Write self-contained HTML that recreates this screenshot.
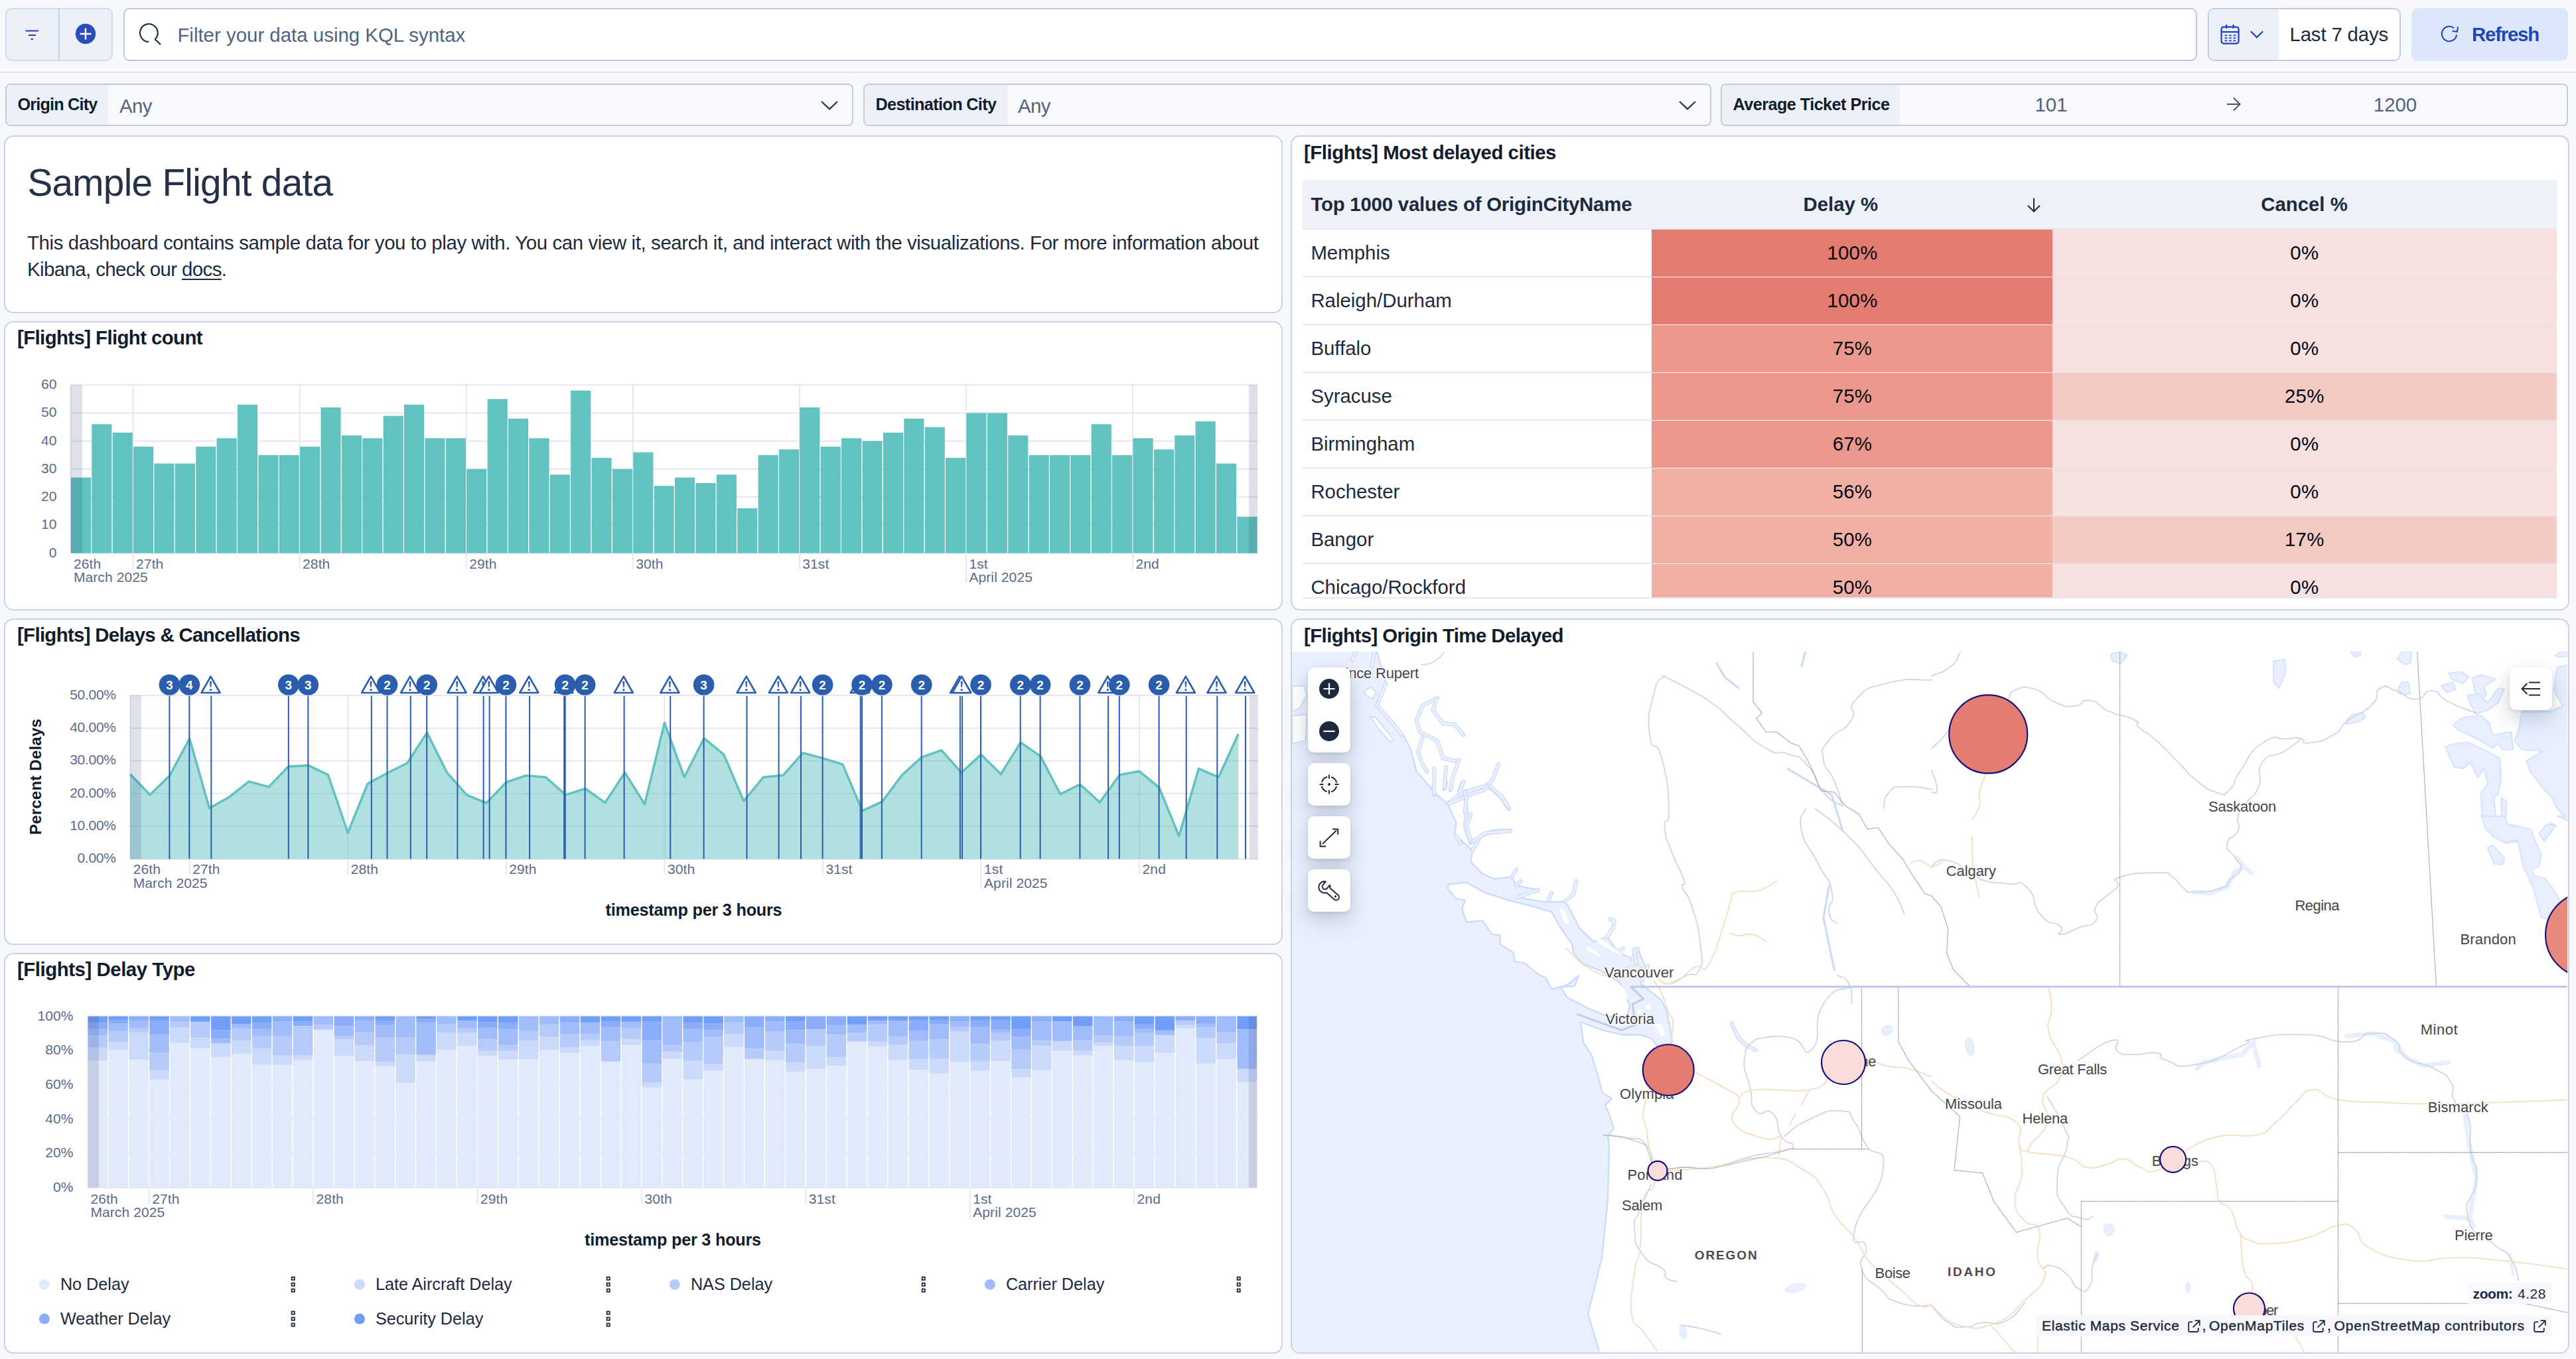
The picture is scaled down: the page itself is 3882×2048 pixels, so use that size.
<!DOCTYPE html>
<html lang="en"><head><meta charset="utf-8"><title>[Flights] Global Flight Dashboard</title>
<style>
html,body{margin:0;padding:0}
body{width:3882px;height:2048px;background:#F6F8FC;position:relative;overflow:hidden;font-family:"Liberation Sans",sans-serif}
.t{position:absolute;white-space:nowrap;line-height:1em}
.box{position:absolute;box-sizing:border-box;border:2px solid #CAD3E2}
.panel{background:#fff;border-radius:14px}
svg{overflow:visible}
svg text{font-family:"Liberation Sans",sans-serif}
</style></head>
<body>
<div class="box" style="left:8px;top:12px;width:162px;height:80px;background:#ECF1F9;border-color:#D3DAE8;border-radius:9px"></div>
<div style="position:absolute;left:88px;top:13px;width:2px;height:78px;background:#CAD3E2"></div>
<svg style="position:absolute;left:36px;top:42px" width="24" height="20" viewBox="0 0 24 20"><g stroke="#1E3FBF" stroke-width="2" fill="none"><path d="M2.5 4.5h19.5M7 11h11M10.5 17h3.5"/></g></svg>
<svg style="position:absolute;left:113px;top:35px" width="32" height="32" viewBox="0 0 32 32"><circle cx="16" cy="16" r="15.2" fill="#2A4DBB"/><path d="M16 7.5v17M7.5 16h17" stroke="#fff" stroke-width="2.4" fill="none"/></svg>
<div class="box" style="left:186px;top:12px;width:3125px;height:80px;background:#fff;border-color:#BFC9DC;border-radius:9px"></div>
<svg style="position:absolute;left:206px;top:32px" width="40" height="40" viewBox="0 0 40 40"><path d="M18.2 30.9 A13.4 13.4 0 1 1 27.6 27.2 M27.4 27 L36 35.2" stroke="#1D2A3E" stroke-width="2.1" fill="none"/></svg>
<div class="t" style="left:267.4px;top:37.5px;font-size:29.4px;font-weight:400;color:#516381;letter-spacing:0.014px;">Filter your data using KQL syntax</div>
<div class="box" style="left:3327px;top:12px;width:291px;height:80px;background:#fff;border-color:#C3CCDC;border-radius:10px;overflow:hidden"><div style="position:absolute;left:0;top:0;width:105px;height:76px;background:#ECF1F9"></div></div>
<svg style="position:absolute;left:3346px;top:36px" width="30" height="32" viewBox="0 0 30 32"><g stroke="#1E3FBF" stroke-width="2.2" fill="none"><rect x="1.6" y="4.6" width="26" height="25" rx="3.5"/><path d="M1.6 12.2h26M9.2 1v6M19.6 1v6"/><path d="M6.5 17.3h4M13 17.3h4M19.5 17.3h4M6.5 21.4h4M13 21.4h4M19.5 21.4h4M6.5 25.4h4M13 25.4h4M19.5 25.4h4" stroke-width="1.8"/></g></svg>
<svg style="position:absolute;left:3390px;top:45px" width="22" height="14" viewBox="0 0 22 14"><path d="M1.8 2.2 L11 11.2 L20.2 2.2" stroke="#1E3FBF" stroke-width="2.2" fill="none"/></svg>
<div class="t" style="left:3450.5px;top:36.9px;font-size:29.4px;font-weight:400;color:#1D2A3E;letter-spacing:-0.159px;">Last 7 days</div>
<div style="position:absolute;left:3634px;top:12px;width:236px;height:80px;background:#DCE7FC;border-radius:10px"></div>
<svg style="position:absolute;left:3678px;top:37px" width="28" height="28" viewBox="0 0 28 28"><path d="M24.2 13.8 A11.2 11.2 0 1 1 18.8 4.4 M24.4 1.6 v7.6 h-7.4" stroke="#1E48B8" stroke-width="2.1" fill="none" transform="rotate(8 13 14)"/></svg>
<div class="t" style="left:3725.0px;top:37.1px;font-size:29.4px;font-weight:700;color:#1E48B8;letter-spacing:-1.21px;">Refresh</div>
<div style="position:absolute;left:0;top:108px;width:3882px;height:2px;background:#E0E5EF"></div>
<div class="box" style="left:8px;top:126px;width:1278px;height:64px;background:#F7F9FD;border-color:#C3CCDC;border-radius:8px;overflow:hidden"><div style="position:absolute;left:0;top:0;width:153px;height:60px;background:#ECF1F9"></div></div><div class="t" style="left:26.5px;top:145.2px;font-size:25.2px;font-weight:700;color:#111C2C;letter-spacing:-0.8px;">Origin City</div>
<div class="box" style="left:1301px;top:126px;width:1278px;height:64px;background:#F7F9FD;border-color:#C3CCDC;border-radius:8px;overflow:hidden"><div style="position:absolute;left:0;top:0;width:215px;height:60px;background:#ECF1F9"></div></div><div class="t" style="left:1319.5px;top:145.2px;font-size:25.2px;font-weight:700;color:#111C2C;letter-spacing:-0.613px;">Destination City</div>
<div class="box" style="left:2593px;top:126px;width:1277px;height:64px;background:#F7F9FD;border-color:#C3CCDC;border-radius:8px;overflow:hidden"><div style="position:absolute;left:0;top:0;width:268px;height:60px;background:#ECF1F9"></div></div><div class="t" style="left:2611.5px;top:145.2px;font-size:25.2px;font-weight:700;color:#111C2C;letter-spacing:-0.527px;">Average Ticket Price</div>
<div class="t" style="left:180.0px;top:144.6px;font-size:29.4px;font-weight:400;color:#516381;letter-spacing:-0.553px;">Any</div>
<div class="t" style="left:1534.0px;top:144.6px;font-size:29.4px;font-weight:400;color:#516381;letter-spacing:-0.553px;">Any</div>
<svg style="position:absolute;left:1236px;top:150px" width="28" height="18" viewBox="0 0 28 18"><path d="M2 3 L14 14.4 L26 3" stroke="#2B3A55" stroke-width="2.4" fill="none"/></svg>
<svg style="position:absolute;left:2529px;top:150px" width="28" height="18" viewBox="0 0 28 18"><path d="M2 3 L14 14.4 L26 3" stroke="#2B3A55" stroke-width="2.4" fill="none"/></svg>
<div class="t" style="left:2091.0px;width:2000px;text-align:center;top:143.1px;font-size:29.4px;font-weight:400;color:#516381;">101</div>
<div class="t" style="left:2609.5px;width:2000px;text-align:center;top:143.1px;font-size:29.4px;font-weight:400;color:#516381;">1200</div>
<svg style="position:absolute;left:3354px;top:145px" width="24" height="24" viewBox="0 0 24 24"><path d="M2 12h19M12 2.5 L21.5 12 L12 21.5" stroke="#45546F" stroke-width="2" fill="none"/></svg>
<div class="box panel" style="left:6px;top:204px;width:1927px;height:268px;"></div>
<div class="box panel" style="left:6px;top:484px;width:1927px;height:436px;"></div>
<div class="box panel" style="left:6px;top:932px;width:1927px;height:492px;"></div>
<div class="box panel" style="left:6px;top:1436px;width:1927px;height:604px;"></div>
<div class="box panel" style="left:1945px;top:204px;width:1927px;height:716px;"></div>
<div class="t" style="left:41.4px;top:248.3px;font-size:56.7px;font-weight:400;color:#243148;letter-spacing:-0.707px;">Sample Flight data</div>
<div class="t" style="left:41.0px;top:351.1px;font-size:29.4px;font-weight:400;color:#1D2A3E;letter-spacing:-0.383px;">This dashboard contains sample data for you to play with. You can view it, search it, and interact with the visualizations. For more information about</div>
<div class="t" style="left:41px;top:390.7px;font-size:29.4px;color:#1D2A3E;letter-spacing:-0.58px">Kibana, check our <span style="text-decoration:underline;text-decoration-thickness:2px;text-underline-offset:4px">docs</span>.</div>
<div class="t" style="left:26.0px;top:493.9px;font-size:29.4px;font-weight:700;color:#111C2C;letter-spacing:-0.603px;">[Flights] Flight count</div>
<div class="t" style="left:26.0px;top:942.1px;font-size:29.4px;font-weight:700;color:#111C2C;letter-spacing:-0.675px;">[Flights] Delays &amp; Cancellations</div>
<div class="t" style="left:26.0px;top:1446.1px;font-size:29.4px;font-weight:700;color:#111C2C;letter-spacing:-0.457px;">[Flights] Delay Type</div>
<div class="t" style="left:1965.0px;top:215.1px;font-size:29.4px;font-weight:700;color:#111C2C;letter-spacing:-0.471px;">[Flights] Most delayed cities</div>
<svg style="position:absolute;left:0;top:0" width="3882" height="2048" viewBox="0 0 3882 2048">
<line x1="106.4" y1="833.6" x2="1895.3" y2="833.6" stroke="#E3E7F2" stroke-width="2"/>
<text x="85.6" y="839.5" font-size="21.0" fill="#5A6B8A" text-anchor="end" letter-spacing="0.1">0</text>
<line x1="106.4" y1="791.4" x2="1895.3" y2="791.4" stroke="#E3E7F2" stroke-width="2"/>
<text x="85.6" y="797.3" font-size="21.0" fill="#5A6B8A" text-anchor="end" letter-spacing="0.1">10</text>
<line x1="106.4" y1="749.1" x2="1895.3" y2="749.1" stroke="#E3E7F2" stroke-width="2"/>
<text x="85.6" y="755.0" font-size="21.0" fill="#5A6B8A" text-anchor="end" letter-spacing="0.1">20</text>
<line x1="106.4" y1="706.9" x2="1895.3" y2="706.9" stroke="#E3E7F2" stroke-width="2"/>
<text x="85.6" y="712.8" font-size="21.0" fill="#5A6B8A" text-anchor="end" letter-spacing="0.1">30</text>
<line x1="106.4" y1="664.7" x2="1895.3" y2="664.7" stroke="#E3E7F2" stroke-width="2"/>
<text x="85.6" y="670.6" font-size="21.0" fill="#5A6B8A" text-anchor="end" letter-spacing="0.1">40</text>
<line x1="106.4" y1="622.4" x2="1895.3" y2="622.4" stroke="#E3E7F2" stroke-width="2"/>
<text x="85.6" y="628.3" font-size="21.0" fill="#5A6B8A" text-anchor="end" letter-spacing="0.1">50</text>
<line x1="106.4" y1="580.2" x2="1895.3" y2="580.2" stroke="#E3E7F2" stroke-width="2"/>
<text x="85.6" y="586.1" font-size="21.0" fill="#5A6B8A" text-anchor="end" letter-spacing="0.1">60</text>
<line x1="200.6" y1="580.2" x2="200.6" y2="833.6" stroke="#E3E7F2" stroke-width="2"/>
<line x1="451.6" y1="580.2" x2="451.6" y2="833.6" stroke="#E3E7F2" stroke-width="2"/>
<line x1="702.7" y1="580.2" x2="702.7" y2="833.6" stroke="#E3E7F2" stroke-width="2"/>
<line x1="953.8" y1="580.2" x2="953.8" y2="833.6" stroke="#E3E7F2" stroke-width="2"/>
<line x1="1204.8" y1="580.2" x2="1204.8" y2="833.6" stroke="#E3E7F2" stroke-width="2"/>
<line x1="1455.9" y1="580.2" x2="1455.9" y2="833.6" stroke="#E3E7F2" stroke-width="2"/>
<line x1="1707.0" y1="580.2" x2="1707.0" y2="833.6" stroke="#E3E7F2" stroke-width="2"/>
<line x1="106.4" y1="580.2" x2="106.4" y2="833.6" stroke="#E3E7F2" stroke-width="2"/>
<rect x="106.9" y="719.6" width="30.1" height="114.0" fill="#61C2BF"/>
<rect x="138.3" y="639.3" width="30.1" height="194.3" fill="#61C2BF"/>
<rect x="169.7" y="652.0" width="30.1" height="181.6" fill="#61C2BF"/>
<rect x="201.1" y="673.1" width="30.1" height="160.5" fill="#61C2BF"/>
<rect x="232.4" y="698.5" width="30.1" height="135.1" fill="#61C2BF"/>
<rect x="263.8" y="698.5" width="30.1" height="135.1" fill="#61C2BF"/>
<rect x="295.2" y="673.1" width="30.1" height="160.5" fill="#61C2BF"/>
<rect x="326.6" y="660.4" width="30.1" height="173.2" fill="#61C2BF"/>
<rect x="358.0" y="609.8" width="30.1" height="223.8" fill="#61C2BF"/>
<rect x="389.4" y="685.8" width="30.1" height="147.8" fill="#61C2BF"/>
<rect x="420.7" y="685.8" width="30.1" height="147.8" fill="#61C2BF"/>
<rect x="452.1" y="673.1" width="30.1" height="160.5" fill="#61C2BF"/>
<rect x="483.5" y="614.0" width="30.1" height="219.6" fill="#61C2BF"/>
<rect x="514.9" y="656.2" width="30.1" height="177.4" fill="#61C2BF"/>
<rect x="546.3" y="660.4" width="30.1" height="173.2" fill="#61C2BF"/>
<rect x="577.7" y="626.7" width="30.1" height="206.9" fill="#61C2BF"/>
<rect x="609.0" y="609.8" width="30.1" height="223.8" fill="#61C2BF"/>
<rect x="640.4" y="660.4" width="30.1" height="173.2" fill="#61C2BF"/>
<rect x="671.8" y="660.4" width="30.1" height="173.2" fill="#61C2BF"/>
<rect x="703.2" y="706.9" width="30.1" height="126.7" fill="#61C2BF"/>
<rect x="734.6" y="601.3" width="30.1" height="232.3" fill="#61C2BF"/>
<rect x="766.0" y="630.9" width="30.1" height="202.7" fill="#61C2BF"/>
<rect x="797.4" y="660.4" width="30.1" height="173.2" fill="#61C2BF"/>
<rect x="828.7" y="715.3" width="30.1" height="118.3" fill="#61C2BF"/>
<rect x="860.1" y="588.6" width="30.1" height="245.0" fill="#61C2BF"/>
<rect x="891.5" y="690.0" width="30.1" height="143.6" fill="#61C2BF"/>
<rect x="922.9" y="706.9" width="30.1" height="126.7" fill="#61C2BF"/>
<rect x="954.3" y="681.6" width="30.1" height="152.0" fill="#61C2BF"/>
<rect x="985.7" y="732.2" width="30.1" height="101.4" fill="#61C2BF"/>
<rect x="1017.0" y="719.6" width="30.1" height="114.0" fill="#61C2BF"/>
<rect x="1048.4" y="728.0" width="30.1" height="105.6" fill="#61C2BF"/>
<rect x="1079.8" y="715.3" width="30.1" height="118.3" fill="#61C2BF"/>
<rect x="1111.2" y="766.0" width="30.1" height="67.6" fill="#61C2BF"/>
<rect x="1142.6" y="685.8" width="30.1" height="147.8" fill="#61C2BF"/>
<rect x="1174.0" y="677.3" width="30.1" height="156.3" fill="#61C2BF"/>
<rect x="1205.3" y="614.0" width="30.1" height="219.6" fill="#61C2BF"/>
<rect x="1236.7" y="673.1" width="30.1" height="160.5" fill="#61C2BF"/>
<rect x="1268.1" y="660.4" width="30.1" height="173.2" fill="#61C2BF"/>
<rect x="1299.5" y="664.7" width="30.1" height="168.9" fill="#61C2BF"/>
<rect x="1330.9" y="652.0" width="30.1" height="181.6" fill="#61C2BF"/>
<rect x="1362.3" y="630.9" width="30.1" height="202.7" fill="#61C2BF"/>
<rect x="1393.7" y="643.6" width="30.1" height="190.0" fill="#61C2BF"/>
<rect x="1425.0" y="690.0" width="30.1" height="143.6" fill="#61C2BF"/>
<rect x="1456.4" y="622.4" width="30.1" height="211.2" fill="#61C2BF"/>
<rect x="1487.8" y="622.4" width="30.1" height="211.2" fill="#61C2BF"/>
<rect x="1519.2" y="656.2" width="30.1" height="177.4" fill="#61C2BF"/>
<rect x="1550.6" y="685.8" width="30.1" height="147.8" fill="#61C2BF"/>
<rect x="1582.0" y="685.8" width="30.1" height="147.8" fill="#61C2BF"/>
<rect x="1613.3" y="685.8" width="30.1" height="147.8" fill="#61C2BF"/>
<rect x="1644.7" y="639.3" width="30.1" height="194.3" fill="#61C2BF"/>
<rect x="1676.1" y="685.8" width="30.1" height="147.8" fill="#61C2BF"/>
<rect x="1707.5" y="660.4" width="30.1" height="173.2" fill="#61C2BF"/>
<rect x="1738.9" y="677.3" width="30.1" height="156.3" fill="#61C2BF"/>
<rect x="1770.3" y="656.2" width="30.1" height="177.4" fill="#61C2BF"/>
<rect x="1801.6" y="635.1" width="30.1" height="198.5" fill="#61C2BF"/>
<rect x="1833.0" y="698.5" width="30.1" height="135.1" fill="#61C2BF"/>
<rect x="1864.4" y="778.7" width="30.1" height="54.9" fill="#61C2BF"/>
<rect x="106.4" y="580.2" width="17.4" height="253.4" fill="rgba(40,55,110,0.15)"/>
<rect x="1882.1" y="580.2" width="13.2" height="253.4" fill="rgba(40,55,110,0.15)"/>
<text x="110.9" y="857.0" font-size="21.0" fill="#5A6B8A" text-anchor="start" letter-spacing="0.1">26th</text>
<text x="110.9" y="877.3" font-size="21.0" fill="#5A6B8A" text-anchor="start" letter-spacing="0.1">March 2025</text>
<line x1="200.6" y1="833.6" x2="200.6" y2="857.5" stroke="#E3E7F2" stroke-width="2"/>
<text x="205.1" y="857.0" font-size="21.0" fill="#5A6B8A" text-anchor="start" letter-spacing="0.1">27th</text>
<line x1="451.6" y1="833.6" x2="451.6" y2="857.5" stroke="#E3E7F2" stroke-width="2"/>
<text x="456.1" y="857.0" font-size="21.0" fill="#5A6B8A" text-anchor="start" letter-spacing="0.1">28th</text>
<line x1="702.7" y1="833.6" x2="702.7" y2="857.5" stroke="#E3E7F2" stroke-width="2"/>
<text x="707.2" y="857.0" font-size="21.0" fill="#5A6B8A" text-anchor="start" letter-spacing="0.1">29th</text>
<line x1="953.8" y1="833.6" x2="953.8" y2="857.5" stroke="#E3E7F2" stroke-width="2"/>
<text x="958.3" y="857.0" font-size="21.0" fill="#5A6B8A" text-anchor="start" letter-spacing="0.1">30th</text>
<line x1="1204.8" y1="833.6" x2="1204.8" y2="857.5" stroke="#E3E7F2" stroke-width="2"/>
<text x="1209.3" y="857.0" font-size="21.0" fill="#5A6B8A" text-anchor="start" letter-spacing="0.1">31st</text>
<line x1="1455.9" y1="833.6" x2="1455.9" y2="878.5" stroke="#E3E7F2" stroke-width="2"/>
<text x="1460.4" y="857.0" font-size="21.0" fill="#5A6B8A" text-anchor="start" letter-spacing="0.1">1st</text>
<text x="1460.4" y="877.3" font-size="21.0" fill="#5A6B8A" text-anchor="start" letter-spacing="0.1">April 2025</text>
<line x1="1707.0" y1="833.6" x2="1707.0" y2="857.5" stroke="#E3E7F2" stroke-width="2"/>
<text x="1711.5" y="857.0" font-size="21.0" fill="#5A6B8A" text-anchor="start" letter-spacing="0.1">2nd</text>
</svg>
<svg style="position:absolute;left:0;top:0" width="3882" height="2048" viewBox="0 0 3882 2048">
<line x1="196.2" y1="1294.4" x2="1896.0" y2="1294.4" stroke="#E3E7F2" stroke-width="2"/>
<text x="174.7" y="1300.3" font-size="21.0" fill="#5A6B8A" text-anchor="end" letter-spacing="-0.248">0.00%</text>
<line x1="196.2" y1="1245.1" x2="1896.0" y2="1245.1" stroke="#E3E7F2" stroke-width="2"/>
<text x="174.7" y="1251.0" font-size="21.0" fill="#5A6B8A" text-anchor="end" letter-spacing="-0.287">10.00%</text>
<line x1="196.2" y1="1195.8" x2="1896.0" y2="1195.8" stroke="#E3E7F2" stroke-width="2"/>
<text x="174.7" y="1201.7" font-size="21.0" fill="#5A6B8A" text-anchor="end" letter-spacing="-0.287">20.00%</text>
<line x1="196.2" y1="1146.5" x2="1896.0" y2="1146.5" stroke="#E3E7F2" stroke-width="2"/>
<text x="174.7" y="1152.4" font-size="21.0" fill="#5A6B8A" text-anchor="end" letter-spacing="-0.287">30.00%</text>
<line x1="196.2" y1="1097.2" x2="1896.0" y2="1097.2" stroke="#E3E7F2" stroke-width="2"/>
<text x="174.7" y="1103.1" font-size="21.0" fill="#5A6B8A" text-anchor="end" letter-spacing="-0.287">40.00%</text>
<line x1="196.2" y1="1047.9" x2="1896.0" y2="1047.9" stroke="#E3E7F2" stroke-width="2"/>
<text x="174.7" y="1053.8" font-size="21.0" fill="#5A6B8A" text-anchor="end" letter-spacing="-0.287">50.00%</text>
<line x1="285.7" y1="1047.9" x2="285.7" y2="1294.4" stroke="#E3E7F2" stroke-width="2"/>
<line x1="524.2" y1="1047.9" x2="524.2" y2="1294.4" stroke="#E3E7F2" stroke-width="2"/>
<line x1="762.8" y1="1047.9" x2="762.8" y2="1294.4" stroke="#E3E7F2" stroke-width="2"/>
<line x1="1001.4" y1="1047.9" x2="1001.4" y2="1294.4" stroke="#E3E7F2" stroke-width="2"/>
<line x1="1239.9" y1="1047.9" x2="1239.9" y2="1294.4" stroke="#E3E7F2" stroke-width="2"/>
<line x1="1478.5" y1="1047.9" x2="1478.5" y2="1294.4" stroke="#E3E7F2" stroke-width="2"/>
<line x1="1717.1" y1="1047.9" x2="1717.1" y2="1294.4" stroke="#E3E7F2" stroke-width="2"/>
<line x1="196.2" y1="1047.9" x2="196.2" y2="1294.4" stroke="#E3E7F2" stroke-width="2"/>
<path d="M196.2 1166.7 L226.0 1197.8 L255.8 1168.7 L285.7 1113.0 L315.5 1218.0 L345.3 1201.2 L375.1 1177.6 L404.9 1185.9 L434.8 1154.9 L464.6 1153.4 L494.4 1167.7 L524.2 1255.0 L554.1 1181.0 L583.9 1164.7 L613.7 1150.0 L643.5 1104.1 L673.3 1163.8 L703.2 1197.8 L733.0 1210.1 L762.8 1179.0 L792.6 1168.7 L822.4 1171.2 L852.3 1197.8 L882.1 1188.4 L911.9 1209.6 L941.7 1164.2 L971.5 1212.1 L1001.4 1089.3 L1031.2 1171.2 L1061.0 1112.5 L1090.8 1137.1 L1120.7 1207.1 L1150.5 1171.2 L1180.3 1168.2 L1210.1 1134.7 L1239.9 1142.6 L1269.8 1151.9 L1299.6 1221.9 L1329.4 1208.1 L1359.2 1168.2 L1389.0 1141.1 L1418.9 1130.7 L1448.7 1164.2 L1478.5 1137.1 L1508.3 1166.7 L1538.1 1118.9 L1568.0 1139.6 L1597.8 1196.8 L1627.6 1182.0 L1657.4 1209.1 L1687.3 1167.7 L1717.1 1162.3 L1746.9 1186.9 L1776.7 1259.9 L1806.5 1158.3 L1836.4 1171.2 L1866.2 1106.1 L1866.2 1294.4 L196.2 1294.4 Z" fill="#61C2BF" fill-opacity="0.5"/>
<path d="M196.2 1166.7 L226.0 1197.8 L255.8 1168.7 L285.7 1113.0 L315.5 1218.0 L345.3 1201.2 L375.1 1177.6 L404.9 1185.9 L434.8 1154.9 L464.6 1153.4 L494.4 1167.7 L524.2 1255.0 L554.1 1181.0 L583.9 1164.7 L613.7 1150.0 L643.5 1104.1 L673.3 1163.8 L703.2 1197.8 L733.0 1210.1 L762.8 1179.0 L792.6 1168.7 L822.4 1171.2 L852.3 1197.8 L882.1 1188.4 L911.9 1209.6 L941.7 1164.2 L971.5 1212.1 L1001.4 1089.3 L1031.2 1171.2 L1061.0 1112.5 L1090.8 1137.1 L1120.7 1207.1 L1150.5 1171.2 L1180.3 1168.2 L1210.1 1134.7 L1239.9 1142.6 L1269.8 1151.9 L1299.6 1221.9 L1329.4 1208.1 L1359.2 1168.2 L1389.0 1141.1 L1418.9 1130.7 L1448.7 1164.2 L1478.5 1137.1 L1508.3 1166.7 L1538.1 1118.9 L1568.0 1139.6 L1597.8 1196.8 L1627.6 1182.0 L1657.4 1209.1 L1687.3 1167.7 L1717.1 1162.3 L1746.9 1186.9 L1776.7 1259.9 L1806.5 1158.3 L1836.4 1171.2 L1866.2 1106.1" fill="none" stroke="#61C2BF" stroke-width="3.5" stroke-linejoin="round"/>
<rect x="196.2" y="1047.9" width="16.5" height="246.5" fill="rgba(40,55,110,0.15)"/>
<rect x="1882.8" y="1047.9" width="13.2" height="246.5" fill="rgba(40,55,110,0.15)"/>
<line x1="255.4" y1="1048.9" x2="255.4" y2="1294.4" stroke="#2B5DAF" stroke-width="2"/>
<line x1="285.3" y1="1048.9" x2="285.3" y2="1294.4" stroke="#2B5DAF" stroke-width="2"/>
<line x1="318.3" y1="1048.9" x2="318.3" y2="1294.4" stroke="#2B5DAF" stroke-width="2"/>
<line x1="434.8" y1="1048.9" x2="434.8" y2="1294.4" stroke="#2B5DAF" stroke-width="2"/>
<line x1="464.3" y1="1048.9" x2="464.3" y2="1294.4" stroke="#2B5DAF" stroke-width="2"/>
<line x1="559.8" y1="1048.9" x2="559.8" y2="1294.4" stroke="#2B5DAF" stroke-width="2"/>
<line x1="583.5" y1="1048.9" x2="583.5" y2="1294.4" stroke="#2B5DAF" stroke-width="2"/>
<line x1="618.8" y1="1048.9" x2="618.8" y2="1294.4" stroke="#2B5DAF" stroke-width="2"/>
<line x1="643.2" y1="1048.9" x2="643.2" y2="1294.4" stroke="#2B5DAF" stroke-width="2"/>
<line x1="689.4" y1="1048.9" x2="689.4" y2="1294.4" stroke="#2B5DAF" stroke-width="2"/>
<line x1="728.6" y1="1048.9" x2="728.6" y2="1294.4" stroke="#2B5DAF" stroke-width="2"/>
<line x1="737.6" y1="1048.9" x2="737.6" y2="1294.4" stroke="#2B5DAF" stroke-width="2"/>
<line x1="762.4" y1="1048.9" x2="762.4" y2="1294.4" stroke="#2B5DAF" stroke-width="2"/>
<line x1="798.1" y1="1048.9" x2="798.1" y2="1294.4" stroke="#2B5DAF" stroke-width="2"/>
<line x1="850.2" y1="1048.9" x2="850.2" y2="1294.4" stroke="#2B5DAF" stroke-width="2"/>
<line x1="851.7" y1="1048.9" x2="851.7" y2="1294.4" stroke="#2B5DAF" stroke-width="2"/>
<line x1="881.6" y1="1048.9" x2="881.6" y2="1294.4" stroke="#2B5DAF" stroke-width="2"/>
<line x1="940.6" y1="1048.9" x2="940.6" y2="1294.4" stroke="#2B5DAF" stroke-width="2"/>
<line x1="1010.2" y1="1048.9" x2="1010.2" y2="1294.4" stroke="#2B5DAF" stroke-width="2"/>
<line x1="1060.6" y1="1048.9" x2="1060.6" y2="1294.4" stroke="#2B5DAF" stroke-width="2"/>
<line x1="1125.5" y1="1048.9" x2="1125.5" y2="1294.4" stroke="#2B5DAF" stroke-width="2"/>
<line x1="1173.6" y1="1048.9" x2="1173.6" y2="1294.4" stroke="#2B5DAF" stroke-width="2"/>
<line x1="1207.0" y1="1048.9" x2="1207.0" y2="1294.4" stroke="#2B5DAF" stroke-width="2"/>
<line x1="1239.6" y1="1048.9" x2="1239.6" y2="1294.4" stroke="#2B5DAF" stroke-width="2"/>
<line x1="1296.7" y1="1048.9" x2="1296.7" y2="1294.4" stroke="#2B5DAF" stroke-width="2"/>
<line x1="1299.0" y1="1048.9" x2="1299.0" y2="1294.4" stroke="#2B5DAF" stroke-width="2"/>
<line x1="1328.9" y1="1048.9" x2="1328.9" y2="1294.4" stroke="#2B5DAF" stroke-width="2"/>
<line x1="1388.7" y1="1048.9" x2="1388.7" y2="1294.4" stroke="#2B5DAF" stroke-width="2"/>
<line x1="1446.9" y1="1048.9" x2="1446.9" y2="1294.4" stroke="#2B5DAF" stroke-width="2"/>
<line x1="1450.0" y1="1048.9" x2="1450.0" y2="1294.4" stroke="#2B5DAF" stroke-width="2"/>
<line x1="1478.0" y1="1048.9" x2="1478.0" y2="1294.4" stroke="#2B5DAF" stroke-width="2"/>
<line x1="1537.7" y1="1048.9" x2="1537.7" y2="1294.4" stroke="#2B5DAF" stroke-width="2"/>
<line x1="1567.6" y1="1048.9" x2="1567.6" y2="1294.4" stroke="#2B5DAF" stroke-width="2"/>
<line x1="1627.4" y1="1048.9" x2="1627.4" y2="1294.4" stroke="#2B5DAF" stroke-width="2"/>
<line x1="1670.1" y1="1048.9" x2="1670.1" y2="1294.4" stroke="#2B5DAF" stroke-width="2"/>
<line x1="1686.8" y1="1048.9" x2="1686.8" y2="1294.4" stroke="#2B5DAF" stroke-width="2"/>
<line x1="1746.6" y1="1048.9" x2="1746.6" y2="1294.4" stroke="#2B5DAF" stroke-width="2"/>
<line x1="1787.7" y1="1048.9" x2="1787.7" y2="1294.4" stroke="#2B5DAF" stroke-width="2"/>
<line x1="1834.3" y1="1048.9" x2="1834.3" y2="1294.4" stroke="#2B5DAF" stroke-width="2"/>
<line x1="1877.0" y1="1048.9" x2="1877.0" y2="1294.4" stroke="#2B5DAF" stroke-width="2"/>
<g transform="translate(317.5 1032)"><path d="M0 -12.6 L14 12 H-14 Z" fill="#fff" stroke="#2B5DAF" stroke-width="2.6" stroke-linejoin="round"/><path d="M-1.5 -5.2 h3 l-0.7 9 h-1.6 Z" fill="#2B5DAF"/><circle cx="0" cy="7.6" r="1.7" fill="#2B5DAF"/></g>
<g transform="translate(559.0 1032)"><path d="M0 -12.6 L14 12 H-14 Z" fill="#fff" stroke="#2B5DAF" stroke-width="2.6" stroke-linejoin="round"/><path d="M-1.5 -5.2 h3 l-0.7 9 h-1.6 Z" fill="#2B5DAF"/><circle cx="0" cy="7.6" r="1.7" fill="#2B5DAF"/></g>
<g transform="translate(618.0 1032)"><path d="M0 -12.6 L14 12 H-14 Z" fill="#fff" stroke="#2B5DAF" stroke-width="2.6" stroke-linejoin="round"/><path d="M-1.5 -5.2 h3 l-0.7 9 h-1.6 Z" fill="#2B5DAF"/><circle cx="0" cy="7.6" r="1.7" fill="#2B5DAF"/></g>
<g transform="translate(688.6 1032)"><path d="M0 -12.6 L14 12 H-14 Z" fill="#fff" stroke="#2B5DAF" stroke-width="2.6" stroke-linejoin="round"/><path d="M-1.5 -5.2 h3 l-0.7 9 h-1.6 Z" fill="#2B5DAF"/><circle cx="0" cy="7.6" r="1.7" fill="#2B5DAF"/></g>
<g transform="translate(727.8 1032)"><path d="M0 -12.6 L14 12 H-14 Z" fill="#fff" stroke="#2B5DAF" stroke-width="2.6" stroke-linejoin="round"/><path d="M-1.5 -5.2 h3 l-0.7 9 h-1.6 Z" fill="#2B5DAF"/><circle cx="0" cy="7.6" r="1.7" fill="#2B5DAF"/></g>
<g transform="translate(736.8 1032)"><path d="M0 -12.6 L14 12 H-14 Z" fill="#fff" stroke="#2B5DAF" stroke-width="2.6" stroke-linejoin="round"/><path d="M-1.5 -5.2 h3 l-0.7 9 h-1.6 Z" fill="#2B5DAF"/><circle cx="0" cy="7.6" r="1.7" fill="#2B5DAF"/></g>
<g transform="translate(797.3 1032)"><path d="M0 -12.6 L14 12 H-14 Z" fill="#fff" stroke="#2B5DAF" stroke-width="2.6" stroke-linejoin="round"/><path d="M-1.5 -5.2 h3 l-0.7 9 h-1.6 Z" fill="#2B5DAF"/><circle cx="0" cy="7.6" r="1.7" fill="#2B5DAF"/></g>
<g transform="translate(849.4 1032)"><path d="M0 -12.6 L14 12 H-14 Z" fill="#fff" stroke="#2B5DAF" stroke-width="2.6" stroke-linejoin="round"/><path d="M-1.5 -5.2 h3 l-0.7 9 h-1.6 Z" fill="#2B5DAF"/><circle cx="0" cy="7.6" r="1.7" fill="#2B5DAF"/></g>
<g transform="translate(939.8 1032)"><path d="M0 -12.6 L14 12 H-14 Z" fill="#fff" stroke="#2B5DAF" stroke-width="2.6" stroke-linejoin="round"/><path d="M-1.5 -5.2 h3 l-0.7 9 h-1.6 Z" fill="#2B5DAF"/><circle cx="0" cy="7.6" r="1.7" fill="#2B5DAF"/></g>
<g transform="translate(1009.4 1032)"><path d="M0 -12.6 L14 12 H-14 Z" fill="#fff" stroke="#2B5DAF" stroke-width="2.6" stroke-linejoin="round"/><path d="M-1.5 -5.2 h3 l-0.7 9 h-1.6 Z" fill="#2B5DAF"/><circle cx="0" cy="7.6" r="1.7" fill="#2B5DAF"/></g>
<g transform="translate(1124.7 1032)"><path d="M0 -12.6 L14 12 H-14 Z" fill="#fff" stroke="#2B5DAF" stroke-width="2.6" stroke-linejoin="round"/><path d="M-1.5 -5.2 h3 l-0.7 9 h-1.6 Z" fill="#2B5DAF"/><circle cx="0" cy="7.6" r="1.7" fill="#2B5DAF"/></g>
<g transform="translate(1172.8 1032)"><path d="M0 -12.6 L14 12 H-14 Z" fill="#fff" stroke="#2B5DAF" stroke-width="2.6" stroke-linejoin="round"/><path d="M-1.5 -5.2 h3 l-0.7 9 h-1.6 Z" fill="#2B5DAF"/><circle cx="0" cy="7.6" r="1.7" fill="#2B5DAF"/></g>
<g transform="translate(1206.2 1032)"><path d="M0 -12.6 L14 12 H-14 Z" fill="#fff" stroke="#2B5DAF" stroke-width="2.6" stroke-linejoin="round"/><path d="M-1.5 -5.2 h3 l-0.7 9 h-1.6 Z" fill="#2B5DAF"/><circle cx="0" cy="7.6" r="1.7" fill="#2B5DAF"/></g>
<g transform="translate(1295.9 1032)"><path d="M0 -12.6 L14 12 H-14 Z" fill="#fff" stroke="#2B5DAF" stroke-width="2.6" stroke-linejoin="round"/><path d="M-1.5 -5.2 h3 l-0.7 9 h-1.6 Z" fill="#2B5DAF"/><circle cx="0" cy="7.6" r="1.7" fill="#2B5DAF"/></g>
<g transform="translate(1446.1 1032)"><path d="M0 -12.6 L14 12 H-14 Z" fill="#fff" stroke="#2B5DAF" stroke-width="2.6" stroke-linejoin="round"/><path d="M-1.5 -5.2 h3 l-0.7 9 h-1.6 Z" fill="#2B5DAF"/><circle cx="0" cy="7.6" r="1.7" fill="#2B5DAF"/></g>
<g transform="translate(1449.2 1032)"><path d="M0 -12.6 L14 12 H-14 Z" fill="#fff" stroke="#2B5DAF" stroke-width="2.6" stroke-linejoin="round"/><path d="M-1.5 -5.2 h3 l-0.7 9 h-1.6 Z" fill="#2B5DAF"/><circle cx="0" cy="7.6" r="1.7" fill="#2B5DAF"/></g>
<g transform="translate(1669.3 1032)"><path d="M0 -12.6 L14 12 H-14 Z" fill="#fff" stroke="#2B5DAF" stroke-width="2.6" stroke-linejoin="round"/><path d="M-1.5 -5.2 h3 l-0.7 9 h-1.6 Z" fill="#2B5DAF"/><circle cx="0" cy="7.6" r="1.7" fill="#2B5DAF"/></g>
<g transform="translate(1786.9 1032)"><path d="M0 -12.6 L14 12 H-14 Z" fill="#fff" stroke="#2B5DAF" stroke-width="2.6" stroke-linejoin="round"/><path d="M-1.5 -5.2 h3 l-0.7 9 h-1.6 Z" fill="#2B5DAF"/><circle cx="0" cy="7.6" r="1.7" fill="#2B5DAF"/></g>
<g transform="translate(1833.5 1032)"><path d="M0 -12.6 L14 12 H-14 Z" fill="#fff" stroke="#2B5DAF" stroke-width="2.6" stroke-linejoin="round"/><path d="M-1.5 -5.2 h3 l-0.7 9 h-1.6 Z" fill="#2B5DAF"/><circle cx="0" cy="7.6" r="1.7" fill="#2B5DAF"/></g>
<g transform="translate(1876.2 1032)"><path d="M0 -12.6 L14 12 H-14 Z" fill="#fff" stroke="#2B5DAF" stroke-width="2.6" stroke-linejoin="round"/><path d="M-1.5 -5.2 h3 l-0.7 9 h-1.6 Z" fill="#2B5DAF"/><circle cx="0" cy="7.6" r="1.7" fill="#2B5DAF"/></g>
<circle cx="255.4" cy="1032" r="15.8" fill="#2B5DAF"/>
<text x="255.4" y="1038.5" font-size="18.9" fill="#fff" text-anchor="middle" font-weight="700">3</text>
<circle cx="285.3" cy="1032" r="15.8" fill="#2B5DAF"/>
<text x="285.3" y="1038.5" font-size="18.9" fill="#fff" text-anchor="middle" font-weight="700">4</text>
<circle cx="434.8" cy="1032" r="15.8" fill="#2B5DAF"/>
<text x="434.8" y="1038.5" font-size="18.9" fill="#fff" text-anchor="middle" font-weight="700">3</text>
<circle cx="464.3" cy="1032" r="15.8" fill="#2B5DAF"/>
<text x="464.3" y="1038.5" font-size="18.9" fill="#fff" text-anchor="middle" font-weight="700">3</text>
<circle cx="583.5" cy="1032" r="15.8" fill="#2B5DAF"/>
<text x="583.5" y="1038.5" font-size="18.9" fill="#fff" text-anchor="middle" font-weight="700">2</text>
<circle cx="643.2" cy="1032" r="15.8" fill="#2B5DAF"/>
<text x="643.2" y="1038.5" font-size="18.9" fill="#fff" text-anchor="middle" font-weight="700">2</text>
<circle cx="762.4" cy="1032" r="15.8" fill="#2B5DAF"/>
<text x="762.4" y="1038.5" font-size="18.9" fill="#fff" text-anchor="middle" font-weight="700">2</text>
<circle cx="851.7" cy="1032" r="15.8" fill="#2B5DAF"/>
<text x="851.7" y="1038.5" font-size="18.9" fill="#fff" text-anchor="middle" font-weight="700">2</text>
<circle cx="881.6" cy="1032" r="15.8" fill="#2B5DAF"/>
<text x="881.6" y="1038.5" font-size="18.9" fill="#fff" text-anchor="middle" font-weight="700">2</text>
<circle cx="1060.6" cy="1032" r="15.8" fill="#2B5DAF"/>
<text x="1060.6" y="1038.5" font-size="18.9" fill="#fff" text-anchor="middle" font-weight="700">3</text>
<circle cx="1239.6" cy="1032" r="15.8" fill="#2B5DAF"/>
<text x="1239.6" y="1038.5" font-size="18.9" fill="#fff" text-anchor="middle" font-weight="700">2</text>
<circle cx="1299.0" cy="1032" r="15.8" fill="#2B5DAF"/>
<text x="1299.0" y="1038.5" font-size="18.9" fill="#fff" text-anchor="middle" font-weight="700">2</text>
<circle cx="1328.9" cy="1032" r="15.8" fill="#2B5DAF"/>
<text x="1328.9" y="1038.5" font-size="18.9" fill="#fff" text-anchor="middle" font-weight="700">2</text>
<circle cx="1388.7" cy="1032" r="15.8" fill="#2B5DAF"/>
<text x="1388.7" y="1038.5" font-size="18.9" fill="#fff" text-anchor="middle" font-weight="700">2</text>
<circle cx="1478.0" cy="1032" r="15.8" fill="#2B5DAF"/>
<text x="1478.0" y="1038.5" font-size="18.9" fill="#fff" text-anchor="middle" font-weight="700">2</text>
<circle cx="1537.7" cy="1032" r="15.8" fill="#2B5DAF"/>
<text x="1537.7" y="1038.5" font-size="18.9" fill="#fff" text-anchor="middle" font-weight="700">2</text>
<circle cx="1567.6" cy="1032" r="15.8" fill="#2B5DAF"/>
<text x="1567.6" y="1038.5" font-size="18.9" fill="#fff" text-anchor="middle" font-weight="700">2</text>
<circle cx="1627.4" cy="1032" r="15.8" fill="#2B5DAF"/>
<text x="1627.4" y="1038.5" font-size="18.9" fill="#fff" text-anchor="middle" font-weight="700">2</text>
<circle cx="1686.8" cy="1032" r="15.8" fill="#2B5DAF"/>
<text x="1686.8" y="1038.5" font-size="18.9" fill="#fff" text-anchor="middle" font-weight="700">2</text>
<circle cx="1746.6" cy="1032" r="15.8" fill="#2B5DAF"/>
<text x="1746.6" y="1038.5" font-size="18.9" fill="#fff" text-anchor="middle" font-weight="700">2</text>
<text x="200.7" y="1317.4" font-size="21.0" fill="#5A6B8A" text-anchor="start" letter-spacing="0.1">26th</text>
<text x="200.7" y="1337.7" font-size="21.0" fill="#5A6B8A" text-anchor="start" letter-spacing="0.1">March 2025</text>
<line x1="285.7" y1="1294.4" x2="285.7" y2="1317.9" stroke="#E3E7F2" stroke-width="2"/>
<text x="290.2" y="1317.4" font-size="21.0" fill="#5A6B8A" text-anchor="start" letter-spacing="0.1">27th</text>
<line x1="524.2" y1="1294.4" x2="524.2" y2="1317.9" stroke="#E3E7F2" stroke-width="2"/>
<text x="528.7" y="1317.4" font-size="21.0" fill="#5A6B8A" text-anchor="start" letter-spacing="0.1">28th</text>
<line x1="762.8" y1="1294.4" x2="762.8" y2="1317.9" stroke="#E3E7F2" stroke-width="2"/>
<text x="767.3" y="1317.4" font-size="21.0" fill="#5A6B8A" text-anchor="start" letter-spacing="0.1">29th</text>
<line x1="1001.4" y1="1294.4" x2="1001.4" y2="1317.9" stroke="#E3E7F2" stroke-width="2"/>
<text x="1005.9" y="1317.4" font-size="21.0" fill="#5A6B8A" text-anchor="start" letter-spacing="0.1">30th</text>
<line x1="1239.9" y1="1294.4" x2="1239.9" y2="1317.9" stroke="#E3E7F2" stroke-width="2"/>
<text x="1244.4" y="1317.4" font-size="21.0" fill="#5A6B8A" text-anchor="start" letter-spacing="0.1">31st</text>
<line x1="1478.5" y1="1294.4" x2="1478.5" y2="1338.9" stroke="#E3E7F2" stroke-width="2"/>
<text x="1483.0" y="1317.4" font-size="21.0" fill="#5A6B8A" text-anchor="start" letter-spacing="0.1">1st</text>
<text x="1483.0" y="1337.7" font-size="21.0" fill="#5A6B8A" text-anchor="start" letter-spacing="0.1">April 2025</text>
<line x1="1717.1" y1="1294.4" x2="1717.1" y2="1317.9" stroke="#E3E7F2" stroke-width="2"/>
<text x="1721.6" y="1317.4" font-size="21.0" fill="#5A6B8A" text-anchor="start" letter-spacing="0.1">2nd</text>
<text x="1045.5" y="1380.0" font-size="25.2" fill="#111C2C" text-anchor="middle" font-weight="700" letter-spacing="-0.203">timestamp per 3 hours</text>
<text transform="translate(62 1170.5) rotate(-90)" font-size="24" font-weight="700" fill="#111C2C" text-anchor="middle" letter-spacing="0.208">Percent Delays</text>
</svg>
<svg style="position:absolute;left:0;top:0" width="3882" height="2048" viewBox="0 0 3882 2048">
<line x1="131.9" y1="1789.7" x2="1894.7" y2="1789.7" stroke="#E3E7F2" stroke-width="2"/>
<text x="110.5" y="1795.9" font-size="21.0" fill="#5A6B8A" text-anchor="end" letter-spacing="0.1">0%</text>
<line x1="131.9" y1="1738.1" x2="1894.7" y2="1738.1" stroke="#E3E7F2" stroke-width="2"/>
<text x="110.5" y="1744.3" font-size="21.0" fill="#5A6B8A" text-anchor="end" letter-spacing="0.1">20%</text>
<line x1="131.9" y1="1686.5" x2="1894.7" y2="1686.5" stroke="#E3E7F2" stroke-width="2"/>
<text x="110.5" y="1692.7" font-size="21.0" fill="#5A6B8A" text-anchor="end" letter-spacing="0.1">40%</text>
<line x1="131.9" y1="1634.8" x2="1894.7" y2="1634.8" stroke="#E3E7F2" stroke-width="2"/>
<text x="110.5" y="1641.0" font-size="21.0" fill="#5A6B8A" text-anchor="end" letter-spacing="0.1">60%</text>
<line x1="131.9" y1="1583.2" x2="1894.7" y2="1583.2" stroke="#E3E7F2" stroke-width="2"/>
<text x="110.5" y="1589.4" font-size="21.0" fill="#5A6B8A" text-anchor="end" letter-spacing="0.1">80%</text>
<line x1="131.9" y1="1531.6" x2="1894.7" y2="1531.6" stroke="#E3E7F2" stroke-width="2"/>
<text x="110.5" y="1537.8" font-size="21.0" fill="#5A6B8A" text-anchor="end" letter-spacing="0.1">100%</text>
<rect x="132.5" y="1531.6" width="29.5" height="9.3" fill="#709DF7"/>
<rect x="132.5" y="1540.9" width="29.5" height="10.0" fill="#8BADF9"/>
<rect x="132.5" y="1550.9" width="29.5" height="9.1" fill="#A1BCFA"/>
<rect x="132.5" y="1560.0" width="29.5" height="18.9" fill="#B6CBFA"/>
<rect x="132.5" y="1578.9" width="29.5" height="19.8" fill="#CBDAFB"/>
<rect x="132.5" y="1598.7" width="29.5" height="191.0" fill="#E1EAFB"/>
<rect x="163.4" y="1531.6" width="29.5" height="5.4" fill="#709DF7"/>
<rect x="163.4" y="1537.0" width="29.5" height="5.8" fill="#8BADF9"/>
<rect x="163.4" y="1542.8" width="29.5" height="11.4" fill="#A1BCFA"/>
<rect x="163.4" y="1554.2" width="29.5" height="16.5" fill="#B6CBFA"/>
<rect x="163.4" y="1570.7" width="29.5" height="11.2" fill="#CBDAFB"/>
<rect x="163.4" y="1581.9" width="29.5" height="207.8" fill="#E1EAFB"/>
<rect x="194.4" y="1531.6" width="29.5" height="6.3" fill="#8BADF9"/>
<rect x="194.4" y="1537.9" width="29.5" height="11.9" fill="#A1BCFA"/>
<rect x="194.4" y="1549.8" width="29.5" height="6.1" fill="#B6CBFA"/>
<rect x="194.4" y="1555.8" width="29.5" height="41.7" fill="#CBDAFB"/>
<rect x="194.4" y="1597.5" width="29.5" height="192.2" fill="#E1EAFB"/>
<rect x="225.3" y="1531.6" width="29.5" height="6.3" fill="#709DF7"/>
<rect x="225.3" y="1537.9" width="29.5" height="21.0" fill="#8BADF9"/>
<rect x="225.3" y="1558.9" width="29.5" height="27.3" fill="#A1BCFA"/>
<rect x="225.3" y="1586.1" width="29.5" height="26.8" fill="#B6CBFA"/>
<rect x="225.3" y="1612.9" width="29.5" height="14.0" fill="#CBDAFB"/>
<rect x="225.3" y="1626.9" width="29.5" height="162.8" fill="#E1EAFB"/>
<rect x="256.2" y="1531.6" width="29.5" height="8.2" fill="#A1BCFA"/>
<rect x="256.2" y="1539.8" width="29.5" height="8.2" fill="#B6CBFA"/>
<rect x="256.2" y="1547.9" width="29.5" height="23.8" fill="#CBDAFB"/>
<rect x="256.2" y="1571.7" width="29.5" height="218.0" fill="#E1EAFB"/>
<rect x="287.1" y="1531.6" width="29.5" height="8.2" fill="#709DF7"/>
<rect x="287.1" y="1539.8" width="29.5" height="24.0" fill="#B6CBFA"/>
<rect x="287.1" y="1563.7" width="29.5" height="16.1" fill="#CBDAFB"/>
<rect x="287.1" y="1579.8" width="29.5" height="209.9" fill="#E1EAFB"/>
<rect x="318.1" y="1531.6" width="29.5" height="20.5" fill="#709DF7"/>
<rect x="318.1" y="1552.1" width="29.5" height="13.5" fill="#8BADF9"/>
<rect x="318.1" y="1565.6" width="29.5" height="6.8" fill="#A1BCFA"/>
<rect x="318.1" y="1572.4" width="29.5" height="20.5" fill="#CBDAFB"/>
<rect x="318.1" y="1592.9" width="29.5" height="196.8" fill="#E1EAFB"/>
<rect x="349.0" y="1531.6" width="29.5" height="12.1" fill="#709DF7"/>
<rect x="349.0" y="1543.7" width="29.5" height="6.5" fill="#A1BCFA"/>
<rect x="349.0" y="1550.2" width="29.5" height="18.6" fill="#B6CBFA"/>
<rect x="349.0" y="1568.9" width="29.5" height="19.1" fill="#CBDAFB"/>
<rect x="349.0" y="1588.0" width="29.5" height="201.7" fill="#E1EAFB"/>
<rect x="379.9" y="1531.6" width="29.5" height="9.3" fill="#709DF7"/>
<rect x="379.9" y="1540.9" width="29.5" height="10.0" fill="#8BADF9"/>
<rect x="379.9" y="1550.9" width="29.5" height="10.0" fill="#A1BCFA"/>
<rect x="379.9" y="1561.0" width="29.5" height="18.9" fill="#B6CBFA"/>
<rect x="379.9" y="1579.8" width="29.5" height="24.9" fill="#CBDAFB"/>
<rect x="379.9" y="1604.7" width="29.5" height="185.0" fill="#E1EAFB"/>
<rect x="410.8" y="1531.6" width="29.5" height="7.5" fill="#8BADF9"/>
<rect x="410.8" y="1539.1" width="29.5" height="21.9" fill="#A1BCFA"/>
<rect x="410.8" y="1561.0" width="29.5" height="29.8" fill="#B6CBFA"/>
<rect x="410.8" y="1590.8" width="29.5" height="14.7" fill="#CBDAFB"/>
<rect x="410.8" y="1605.4" width="29.5" height="184.3" fill="#E1EAFB"/>
<rect x="441.8" y="1531.6" width="29.5" height="7.5" fill="#709DF7"/>
<rect x="441.8" y="1539.1" width="29.5" height="7.2" fill="#8BADF9"/>
<rect x="441.8" y="1546.3" width="29.5" height="44.5" fill="#B6CBFA"/>
<rect x="441.8" y="1590.8" width="29.5" height="6.8" fill="#CBDAFB"/>
<rect x="441.8" y="1597.5" width="29.5" height="192.2" fill="#E1EAFB"/>
<rect x="472.7" y="1531.6" width="29.5" height="13.0" fill="#A1BCFA"/>
<rect x="472.7" y="1544.6" width="29.5" height="7.2" fill="#B6CBFA"/>
<rect x="472.7" y="1551.9" width="29.5" height="237.8" fill="#E1EAFB"/>
<rect x="503.6" y="1531.6" width="29.5" height="14.7" fill="#8BADF9"/>
<rect x="503.6" y="1546.3" width="29.5" height="14.7" fill="#A1BCFA"/>
<rect x="503.6" y="1561.0" width="29.5" height="5.1" fill="#B6CBFA"/>
<rect x="503.6" y="1566.1" width="29.5" height="24.9" fill="#CBDAFB"/>
<rect x="503.6" y="1591.0" width="29.5" height="198.7" fill="#E1EAFB"/>
<rect x="534.5" y="1531.6" width="29.5" height="6.3" fill="#8BADF9"/>
<rect x="534.5" y="1537.9" width="29.5" height="17.9" fill="#A1BCFA"/>
<rect x="534.5" y="1555.8" width="29.5" height="19.1" fill="#B6CBFA"/>
<rect x="534.5" y="1574.9" width="29.5" height="24.2" fill="#CBDAFB"/>
<rect x="534.5" y="1599.2" width="29.5" height="190.5" fill="#E1EAFB"/>
<rect x="565.5" y="1531.6" width="29.5" height="6.3" fill="#709DF7"/>
<rect x="565.5" y="1537.9" width="29.5" height="6.1" fill="#8BADF9"/>
<rect x="565.5" y="1543.9" width="29.5" height="19.1" fill="#A1BCFA"/>
<rect x="565.5" y="1563.0" width="29.5" height="37.7" fill="#B6CBFA"/>
<rect x="565.5" y="1600.8" width="29.5" height="6.1" fill="#CBDAFB"/>
<rect x="565.5" y="1606.8" width="29.5" height="182.9" fill="#E1EAFB"/>
<rect x="596.4" y="1531.6" width="29.5" height="31.4" fill="#A1BCFA"/>
<rect x="596.4" y="1563.0" width="29.5" height="26.6" fill="#B6CBFA"/>
<rect x="596.4" y="1589.6" width="29.5" height="42.2" fill="#CBDAFB"/>
<rect x="596.4" y="1631.8" width="29.5" height="157.9" fill="#E1EAFB"/>
<rect x="627.3" y="1531.6" width="29.5" height="4.2" fill="#709DF7"/>
<rect x="627.3" y="1535.8" width="29.5" height="5.1" fill="#8BADF9"/>
<rect x="627.3" y="1540.9" width="29.5" height="48.9" fill="#A1BCFA"/>
<rect x="627.3" y="1589.8" width="29.5" height="10.0" fill="#CBDAFB"/>
<rect x="627.3" y="1599.9" width="29.5" height="189.8" fill="#E1EAFB"/>
<rect x="658.2" y="1531.6" width="29.5" height="12.1" fill="#A1BCFA"/>
<rect x="658.2" y="1543.7" width="29.5" height="13.0" fill="#B6CBFA"/>
<rect x="658.2" y="1556.8" width="29.5" height="25.2" fill="#CBDAFB"/>
<rect x="658.2" y="1581.9" width="29.5" height="207.8" fill="#E1EAFB"/>
<rect x="689.2" y="1531.6" width="29.5" height="6.3" fill="#709DF7"/>
<rect x="689.2" y="1537.9" width="29.5" height="12.3" fill="#A1BCFA"/>
<rect x="689.2" y="1550.2" width="29.5" height="6.5" fill="#B6CBFA"/>
<rect x="689.2" y="1556.8" width="29.5" height="19.1" fill="#CBDAFB"/>
<rect x="689.2" y="1575.9" width="29.5" height="213.8" fill="#E1EAFB"/>
<rect x="720.1" y="1531.6" width="29.5" height="8.6" fill="#709DF7"/>
<rect x="720.1" y="1540.2" width="29.5" height="8.9" fill="#8BADF9"/>
<rect x="720.1" y="1549.1" width="29.5" height="17.0" fill="#A1BCFA"/>
<rect x="720.1" y="1566.1" width="29.5" height="17.0" fill="#B6CBFA"/>
<rect x="720.1" y="1583.1" width="29.5" height="8.6" fill="#CBDAFB"/>
<rect x="720.1" y="1591.7" width="29.5" height="198.0" fill="#E1EAFB"/>
<rect x="751.0" y="1531.6" width="29.5" height="9.3" fill="#709DF7"/>
<rect x="751.0" y="1540.9" width="29.5" height="9.1" fill="#8BADF9"/>
<rect x="751.0" y="1550.0" width="29.5" height="24.0" fill="#A1BCFA"/>
<rect x="751.0" y="1574.0" width="29.5" height="9.1" fill="#B6CBFA"/>
<rect x="751.0" y="1583.1" width="29.5" height="14.0" fill="#CBDAFB"/>
<rect x="751.0" y="1597.1" width="29.5" height="192.6" fill="#E1EAFB"/>
<rect x="782.0" y="1531.6" width="29.5" height="21.4" fill="#A1BCFA"/>
<rect x="782.0" y="1553.0" width="29.5" height="15.8" fill="#B6CBFA"/>
<rect x="782.0" y="1568.9" width="29.5" height="27.0" fill="#CBDAFB"/>
<rect x="782.0" y="1595.9" width="29.5" height="193.8" fill="#E1EAFB"/>
<rect x="812.9" y="1531.6" width="29.5" height="12.3" fill="#A1BCFA"/>
<rect x="812.9" y="1543.9" width="29.5" height="18.9" fill="#B6CBFA"/>
<rect x="812.9" y="1562.8" width="29.5" height="19.1" fill="#CBDAFB"/>
<rect x="812.9" y="1581.9" width="29.5" height="207.8" fill="#E1EAFB"/>
<rect x="843.8" y="1531.6" width="29.5" height="9.3" fill="#8BADF9"/>
<rect x="843.8" y="1540.9" width="29.5" height="17.9" fill="#A1BCFA"/>
<rect x="843.8" y="1558.9" width="29.5" height="19.1" fill="#B6CBFA"/>
<rect x="843.8" y="1578.0" width="29.5" height="8.9" fill="#CBDAFB"/>
<rect x="843.8" y="1586.8" width="29.5" height="202.9" fill="#E1EAFB"/>
<rect x="874.7" y="1531.6" width="29.5" height="9.3" fill="#709DF7"/>
<rect x="874.7" y="1540.9" width="29.5" height="17.0" fill="#A1BCFA"/>
<rect x="874.7" y="1557.9" width="29.5" height="9.1" fill="#B6CBFA"/>
<rect x="874.7" y="1567.0" width="29.5" height="8.9" fill="#CBDAFB"/>
<rect x="874.7" y="1575.9" width="29.5" height="213.8" fill="#E1EAFB"/>
<rect x="905.7" y="1531.6" width="29.5" height="7.5" fill="#709DF7"/>
<rect x="905.7" y="1539.1" width="29.5" height="7.9" fill="#8BADF9"/>
<rect x="905.7" y="1547.0" width="29.5" height="22.6" fill="#A1BCFA"/>
<rect x="905.7" y="1569.6" width="29.5" height="30.3" fill="#B6CBFA"/>
<rect x="905.7" y="1599.9" width="29.5" height="189.8" fill="#E1EAFB"/>
<rect x="936.6" y="1531.6" width="29.5" height="8.2" fill="#709DF7"/>
<rect x="936.6" y="1539.8" width="29.5" height="9.1" fill="#A1BCFA"/>
<rect x="936.6" y="1548.8" width="29.5" height="17.0" fill="#B6CBFA"/>
<rect x="936.6" y="1565.8" width="29.5" height="9.1" fill="#CBDAFB"/>
<rect x="936.6" y="1574.9" width="29.5" height="214.8" fill="#E1EAFB"/>
<rect x="967.5" y="1531.6" width="29.5" height="7.5" fill="#709DF7"/>
<rect x="967.5" y="1539.1" width="29.5" height="28.0" fill="#8BADF9"/>
<rect x="967.5" y="1567.0" width="29.5" height="35.9" fill="#A1BCFA"/>
<rect x="967.5" y="1602.9" width="29.5" height="28.9" fill="#B6CBFA"/>
<rect x="967.5" y="1631.8" width="29.5" height="7.2" fill="#CBDAFB"/>
<rect x="967.5" y="1639.0" width="29.5" height="150.7" fill="#E1EAFB"/>
<rect x="998.4" y="1531.6" width="29.5" height="43.3" fill="#A1BCFA"/>
<rect x="998.4" y="1574.9" width="29.5" height="10.0" fill="#B6CBFA"/>
<rect x="998.4" y="1584.9" width="29.5" height="10.9" fill="#CBDAFB"/>
<rect x="998.4" y="1595.9" width="29.5" height="193.8" fill="#E1EAFB"/>
<rect x="1029.4" y="1531.6" width="29.5" height="9.3" fill="#709DF7"/>
<rect x="1029.4" y="1540.9" width="29.5" height="10.0" fill="#8BADF9"/>
<rect x="1029.4" y="1550.9" width="29.5" height="19.1" fill="#A1BCFA"/>
<rect x="1029.4" y="1570.0" width="29.5" height="28.7" fill="#B6CBFA"/>
<rect x="1029.4" y="1598.7" width="29.5" height="28.2" fill="#CBDAFB"/>
<rect x="1029.4" y="1626.9" width="29.5" height="162.8" fill="#E1EAFB"/>
<rect x="1060.3" y="1531.6" width="29.5" height="10.5" fill="#709DF7"/>
<rect x="1060.3" y="1542.1" width="29.5" height="10.0" fill="#8BADF9"/>
<rect x="1060.3" y="1552.1" width="29.5" height="10.7" fill="#A1BCFA"/>
<rect x="1060.3" y="1562.8" width="29.5" height="41.0" fill="#B6CBFA"/>
<rect x="1060.3" y="1603.8" width="29.5" height="10.0" fill="#CBDAFB"/>
<rect x="1060.3" y="1613.8" width="29.5" height="175.9" fill="#E1EAFB"/>
<rect x="1091.2" y="1531.6" width="29.5" height="9.3" fill="#A1BCFA"/>
<rect x="1091.2" y="1540.9" width="29.5" height="17.9" fill="#B6CBFA"/>
<rect x="1091.2" y="1558.9" width="29.5" height="19.1" fill="#CBDAFB"/>
<rect x="1091.2" y="1578.0" width="29.5" height="211.7" fill="#E1EAFB"/>
<rect x="1122.1" y="1531.6" width="29.5" height="16.3" fill="#8BADF9"/>
<rect x="1122.1" y="1547.9" width="29.5" height="32.1" fill="#A1BCFA"/>
<rect x="1122.1" y="1580.1" width="29.5" height="15.8" fill="#B6CBFA"/>
<rect x="1122.1" y="1595.9" width="29.5" height="193.8" fill="#E1EAFB"/>
<rect x="1153.1" y="1531.6" width="29.5" height="7.5" fill="#8BADF9"/>
<rect x="1153.1" y="1539.1" width="29.5" height="14.9" fill="#A1BCFA"/>
<rect x="1153.1" y="1554.0" width="29.5" height="29.1" fill="#B6CBFA"/>
<rect x="1153.1" y="1583.1" width="29.5" height="14.7" fill="#CBDAFB"/>
<rect x="1153.1" y="1597.8" width="29.5" height="191.9" fill="#E1EAFB"/>
<rect x="1184.0" y="1531.6" width="29.5" height="7.5" fill="#709DF7"/>
<rect x="1184.0" y="1539.1" width="29.5" height="13.5" fill="#8BADF9"/>
<rect x="1184.0" y="1552.6" width="29.5" height="20.7" fill="#A1BCFA"/>
<rect x="1184.0" y="1573.3" width="29.5" height="27.7" fill="#B6CBFA"/>
<rect x="1184.0" y="1601.0" width="29.5" height="14.0" fill="#CBDAFB"/>
<rect x="1184.0" y="1615.0" width="29.5" height="174.7" fill="#E1EAFB"/>
<rect x="1214.9" y="1531.6" width="29.5" height="19.8" fill="#8BADF9"/>
<rect x="1214.9" y="1551.4" width="29.5" height="24.5" fill="#B6CBFA"/>
<rect x="1214.9" y="1575.9" width="29.5" height="34.9" fill="#CBDAFB"/>
<rect x="1214.9" y="1610.8" width="29.5" height="178.9" fill="#E1EAFB"/>
<rect x="1245.8" y="1531.6" width="29.5" height="13.3" fill="#8BADF9"/>
<rect x="1245.8" y="1544.9" width="29.5" height="14.2" fill="#A1BCFA"/>
<rect x="1245.8" y="1559.1" width="29.5" height="33.8" fill="#B6CBFA"/>
<rect x="1245.8" y="1592.9" width="29.5" height="13.3" fill="#CBDAFB"/>
<rect x="1245.8" y="1606.1" width="29.5" height="183.6" fill="#E1EAFB"/>
<rect x="1276.8" y="1531.6" width="29.5" height="12.3" fill="#709DF7"/>
<rect x="1276.8" y="1543.9" width="29.5" height="12.8" fill="#A1BCFA"/>
<rect x="1276.8" y="1556.8" width="29.5" height="12.8" fill="#B6CBFA"/>
<rect x="1276.8" y="1569.6" width="29.5" height="220.1" fill="#E1EAFB"/>
<rect x="1307.7" y="1531.6" width="29.5" height="6.3" fill="#709DF7"/>
<rect x="1307.7" y="1537.9" width="29.5" height="6.5" fill="#A1BCFA"/>
<rect x="1307.7" y="1544.4" width="29.5" height="25.4" fill="#B6CBFA"/>
<rect x="1307.7" y="1569.8" width="29.5" height="7.0" fill="#CBDAFB"/>
<rect x="1307.7" y="1576.8" width="29.5" height="212.9" fill="#E1EAFB"/>
<rect x="1338.6" y="1531.6" width="29.5" height="6.3" fill="#709DF7"/>
<rect x="1338.6" y="1537.9" width="29.5" height="24.0" fill="#A1BCFA"/>
<rect x="1338.6" y="1561.9" width="29.5" height="12.1" fill="#B6CBFA"/>
<rect x="1338.6" y="1574.0" width="29.5" height="23.8" fill="#CBDAFB"/>
<rect x="1338.6" y="1597.8" width="29.5" height="191.9" fill="#E1EAFB"/>
<rect x="1369.6" y="1531.6" width="29.5" height="5.4" fill="#709DF7"/>
<rect x="1369.6" y="1537.0" width="29.5" height="16.1" fill="#8BADF9"/>
<rect x="1369.6" y="1553.0" width="29.5" height="15.8" fill="#A1BCFA"/>
<rect x="1369.6" y="1568.9" width="29.5" height="27.0" fill="#B6CBFA"/>
<rect x="1369.6" y="1595.9" width="29.5" height="16.3" fill="#CBDAFB"/>
<rect x="1369.6" y="1612.2" width="29.5" height="177.5" fill="#E1EAFB"/>
<rect x="1400.5" y="1531.6" width="29.5" height="5.4" fill="#709DF7"/>
<rect x="1400.5" y="1537.0" width="29.5" height="6.1" fill="#8BADF9"/>
<rect x="1400.5" y="1543.0" width="29.5" height="23.1" fill="#A1BCFA"/>
<rect x="1400.5" y="1566.1" width="29.5" height="28.9" fill="#B6CBFA"/>
<rect x="1400.5" y="1595.0" width="29.5" height="22.8" fill="#CBDAFB"/>
<rect x="1400.5" y="1617.8" width="29.5" height="171.9" fill="#E1EAFB"/>
<rect x="1431.4" y="1531.6" width="29.5" height="7.5" fill="#8BADF9"/>
<rect x="1431.4" y="1539.1" width="29.5" height="7.9" fill="#A1BCFA"/>
<rect x="1431.4" y="1547.0" width="29.5" height="7.0" fill="#B6CBFA"/>
<rect x="1431.4" y="1554.0" width="29.5" height="45.9" fill="#CBDAFB"/>
<rect x="1431.4" y="1599.9" width="29.5" height="189.8" fill="#E1EAFB"/>
<rect x="1462.3" y="1531.6" width="29.5" height="5.4" fill="#709DF7"/>
<rect x="1462.3" y="1537.0" width="29.5" height="10.0" fill="#8BADF9"/>
<rect x="1462.3" y="1547.0" width="29.5" height="26.1" fill="#A1BCFA"/>
<rect x="1462.3" y="1573.1" width="29.5" height="25.9" fill="#B6CBFA"/>
<rect x="1462.3" y="1598.9" width="29.5" height="14.9" fill="#CBDAFB"/>
<rect x="1462.3" y="1613.8" width="29.5" height="175.9" fill="#E1EAFB"/>
<rect x="1493.3" y="1531.6" width="29.5" height="5.4" fill="#709DF7"/>
<rect x="1493.3" y="1537.0" width="29.5" height="14.9" fill="#8BADF9"/>
<rect x="1493.3" y="1551.9" width="29.5" height="4.9" fill="#A1BCFA"/>
<rect x="1493.3" y="1556.8" width="29.5" height="11.2" fill="#B6CBFA"/>
<rect x="1493.3" y="1567.9" width="29.5" height="31.0" fill="#CBDAFB"/>
<rect x="1493.3" y="1598.9" width="29.5" height="190.8" fill="#E1EAFB"/>
<rect x="1524.2" y="1531.6" width="29.5" height="18.4" fill="#709DF7"/>
<rect x="1524.2" y="1550.0" width="29.5" height="11.9" fill="#8BADF9"/>
<rect x="1524.2" y="1561.9" width="29.5" height="19.1" fill="#A1BCFA"/>
<rect x="1524.2" y="1581.0" width="29.5" height="30.5" fill="#B6CBFA"/>
<rect x="1524.2" y="1611.5" width="29.5" height="12.3" fill="#CBDAFB"/>
<rect x="1524.2" y="1623.8" width="29.5" height="165.9" fill="#E1EAFB"/>
<rect x="1555.1" y="1531.6" width="29.5" height="7.5" fill="#8BADF9"/>
<rect x="1555.1" y="1539.1" width="29.5" height="29.1" fill="#A1BCFA"/>
<rect x="1555.1" y="1568.2" width="29.5" height="7.7" fill="#B6CBFA"/>
<rect x="1555.1" y="1575.9" width="29.5" height="37.0" fill="#CBDAFB"/>
<rect x="1555.1" y="1612.9" width="29.5" height="176.8" fill="#E1EAFB"/>
<rect x="1586.0" y="1531.6" width="29.5" height="7.5" fill="#709DF7"/>
<rect x="1586.0" y="1539.1" width="29.5" height="29.8" fill="#A1BCFA"/>
<rect x="1586.0" y="1568.9" width="29.5" height="14.4" fill="#CBDAFB"/>
<rect x="1586.0" y="1583.3" width="29.5" height="206.4" fill="#E1EAFB"/>
<rect x="1617.0" y="1531.6" width="29.5" height="14.4" fill="#709DF7"/>
<rect x="1617.0" y="1546.0" width="29.5" height="22.1" fill="#A1BCFA"/>
<rect x="1617.0" y="1568.2" width="29.5" height="14.9" fill="#B6CBFA"/>
<rect x="1617.0" y="1583.1" width="29.5" height="7.7" fill="#CBDAFB"/>
<rect x="1617.0" y="1590.8" width="29.5" height="198.9" fill="#E1EAFB"/>
<rect x="1647.9" y="1531.6" width="29.5" height="28.4" fill="#A1BCFA"/>
<rect x="1647.9" y="1560.0" width="29.5" height="10.9" fill="#B6CBFA"/>
<rect x="1647.9" y="1571.0" width="29.5" height="5.6" fill="#CBDAFB"/>
<rect x="1647.9" y="1576.6" width="29.5" height="213.1" fill="#E1EAFB"/>
<rect x="1678.8" y="1531.6" width="29.5" height="7.5" fill="#8BADF9"/>
<rect x="1678.8" y="1539.1" width="29.5" height="21.9" fill="#A1BCFA"/>
<rect x="1678.8" y="1561.0" width="29.5" height="14.9" fill="#B6CBFA"/>
<rect x="1678.8" y="1575.9" width="29.5" height="21.9" fill="#CBDAFB"/>
<rect x="1678.8" y="1597.8" width="29.5" height="191.9" fill="#E1EAFB"/>
<rect x="1709.7" y="1531.6" width="29.5" height="12.3" fill="#709DF7"/>
<rect x="1709.7" y="1543.9" width="29.5" height="6.1" fill="#8BADF9"/>
<rect x="1709.7" y="1550.0" width="29.5" height="6.8" fill="#A1BCFA"/>
<rect x="1709.7" y="1556.8" width="29.5" height="19.1" fill="#B6CBFA"/>
<rect x="1709.7" y="1575.9" width="29.5" height="24.9" fill="#CBDAFB"/>
<rect x="1709.7" y="1600.8" width="29.5" height="188.9" fill="#E1EAFB"/>
<rect x="1740.7" y="1531.6" width="29.5" height="21.2" fill="#709DF7"/>
<rect x="1740.7" y="1552.8" width="29.5" height="7.0" fill="#A1BCFA"/>
<rect x="1740.7" y="1559.8" width="29.5" height="27.7" fill="#CBDAFB"/>
<rect x="1740.7" y="1587.5" width="29.5" height="202.2" fill="#E1EAFB"/>
<rect x="1771.6" y="1531.6" width="29.5" height="6.3" fill="#8BADF9"/>
<rect x="1771.6" y="1537.9" width="29.5" height="6.1" fill="#B6CBFA"/>
<rect x="1771.6" y="1543.9" width="29.5" height="5.8" fill="#CBDAFB"/>
<rect x="1771.6" y="1549.8" width="29.5" height="239.9" fill="#E1EAFB"/>
<rect x="1802.5" y="1531.6" width="29.5" height="11.2" fill="#8BADF9"/>
<rect x="1802.5" y="1542.8" width="29.5" height="5.1" fill="#A1BCFA"/>
<rect x="1802.5" y="1547.9" width="29.5" height="16.8" fill="#B6CBFA"/>
<rect x="1802.5" y="1564.7" width="29.5" height="38.2" fill="#CBDAFB"/>
<rect x="1802.5" y="1602.9" width="29.5" height="186.8" fill="#E1EAFB"/>
<rect x="1833.4" y="1531.6" width="29.5" height="24.2" fill="#A1BCFA"/>
<rect x="1833.4" y="1555.8" width="29.5" height="16.1" fill="#B6CBFA"/>
<rect x="1833.4" y="1571.9" width="29.5" height="24.0" fill="#CBDAFB"/>
<rect x="1833.4" y="1595.9" width="29.5" height="193.8" fill="#E1EAFB"/>
<rect x="1864.4" y="1531.6" width="29.5" height="19.8" fill="#709DF7"/>
<rect x="1864.4" y="1551.4" width="29.5" height="59.4" fill="#A1BCFA"/>
<rect x="1864.4" y="1610.8" width="29.5" height="20.0" fill="#CBDAFB"/>
<rect x="1864.4" y="1630.8" width="29.5" height="158.9" fill="#E1EAFB"/>
<rect x="131.9" y="1531.6" width="17" height="258.1" fill="rgba(40,55,110,0.15)"/>
<rect x="1881.9" y="1531.6" width="12.8" height="258.1" fill="rgba(40,55,110,0.15)"/>
<text x="136.4" y="1814.0" font-size="21.0" fill="#5A6B8A" text-anchor="start" letter-spacing="0.1">26th</text>
<text x="136.4" y="1834.3" font-size="21.0" fill="#5A6B8A" text-anchor="start" letter-spacing="0.1">March 2025</text>
<line x1="224.7" y1="1789.7" x2="224.7" y2="1814.5" stroke="#E3E7F2" stroke-width="2"/>
<text x="229.2" y="1814.0" font-size="21.0" fill="#5A6B8A" text-anchor="start" letter-spacing="0.1">27th</text>
<line x1="472.1" y1="1789.7" x2="472.1" y2="1814.5" stroke="#E3E7F2" stroke-width="2"/>
<text x="476.6" y="1814.0" font-size="21.0" fill="#5A6B8A" text-anchor="start" letter-spacing="0.1">28th</text>
<line x1="719.5" y1="1789.7" x2="719.5" y2="1814.5" stroke="#E3E7F2" stroke-width="2"/>
<text x="724.0" y="1814.0" font-size="21.0" fill="#5A6B8A" text-anchor="start" letter-spacing="0.1">29th</text>
<line x1="966.9" y1="1789.7" x2="966.9" y2="1814.5" stroke="#E3E7F2" stroke-width="2"/>
<text x="971.4" y="1814.0" font-size="21.0" fill="#5A6B8A" text-anchor="start" letter-spacing="0.1">30th</text>
<line x1="1214.3" y1="1789.7" x2="1214.3" y2="1814.5" stroke="#E3E7F2" stroke-width="2"/>
<text x="1218.8" y="1814.0" font-size="21.0" fill="#5A6B8A" text-anchor="start" letter-spacing="0.1">31st</text>
<line x1="1461.7" y1="1789.7" x2="1461.7" y2="1835.5" stroke="#E3E7F2" stroke-width="2"/>
<text x="1466.2" y="1814.0" font-size="21.0" fill="#5A6B8A" text-anchor="start" letter-spacing="0.1">1st</text>
<text x="1466.2" y="1834.3" font-size="21.0" fill="#5A6B8A" text-anchor="start" letter-spacing="0.1">April 2025</text>
<line x1="1709.1" y1="1789.7" x2="1709.1" y2="1814.5" stroke="#E3E7F2" stroke-width="2"/>
<text x="1713.6" y="1814.0" font-size="21.0" fill="#5A6B8A" text-anchor="start" letter-spacing="0.1">2nd</text>
<text x="1014.0" y="1877.2" font-size="25.2" fill="#111C2C" text-anchor="middle" font-weight="700" letter-spacing="-0.203">timestamp per 3 hours</text>
<circle cx="66.9" cy="1935.7" r="8" fill="#E1EAFB"/>
<text x="90.9" y="1944.3" font-size="25.2" fill="#1D2A3E" text-anchor="start" letter-spacing="0">No Delay</text>
<rect x="439.6" y="1924.6" width="4.2" height="4.2" fill="#fff" stroke="#1D2A3E" stroke-width="1.8"/>
<rect x="439.6" y="1933.6" width="4.2" height="4.2" fill="#fff" stroke="#1D2A3E" stroke-width="1.8"/>
<rect x="439.6" y="1942.6" width="4.2" height="4.2" fill="#fff" stroke="#1D2A3E" stroke-width="1.8"/>
<circle cx="541.9" cy="1935.7" r="8" fill="#CBDAFB"/>
<text x="565.9" y="1944.3" font-size="25.2" fill="#1D2A3E" text-anchor="start" letter-spacing="0">Late Aircraft Delay</text>
<rect x="914.6" y="1924.6" width="4.2" height="4.2" fill="#fff" stroke="#1D2A3E" stroke-width="1.8"/>
<rect x="914.6" y="1933.6" width="4.2" height="4.2" fill="#fff" stroke="#1D2A3E" stroke-width="1.8"/>
<rect x="914.6" y="1942.6" width="4.2" height="4.2" fill="#fff" stroke="#1D2A3E" stroke-width="1.8"/>
<circle cx="1016.9" cy="1935.7" r="8" fill="#B6CBFA"/>
<text x="1040.9" y="1944.3" font-size="25.2" fill="#1D2A3E" text-anchor="start" letter-spacing="0">NAS Delay</text>
<rect x="1389.6" y="1924.6" width="4.2" height="4.2" fill="#fff" stroke="#1D2A3E" stroke-width="1.8"/>
<rect x="1389.6" y="1933.6" width="4.2" height="4.2" fill="#fff" stroke="#1D2A3E" stroke-width="1.8"/>
<rect x="1389.6" y="1942.6" width="4.2" height="4.2" fill="#fff" stroke="#1D2A3E" stroke-width="1.8"/>
<circle cx="1491.9" cy="1935.7" r="8" fill="#A1BCFA"/>
<text x="1515.9" y="1944.3" font-size="25.2" fill="#1D2A3E" text-anchor="start" letter-spacing="0">Carrier Delay</text>
<rect x="1864.6" y="1924.6" width="4.2" height="4.2" fill="#fff" stroke="#1D2A3E" stroke-width="1.8"/>
<rect x="1864.6" y="1933.6" width="4.2" height="4.2" fill="#fff" stroke="#1D2A3E" stroke-width="1.8"/>
<rect x="1864.6" y="1942.6" width="4.2" height="4.2" fill="#fff" stroke="#1D2A3E" stroke-width="1.8"/>
<circle cx="66.9" cy="1987.5" r="8" fill="#8BADF9"/>
<text x="90.9" y="1996.1" font-size="25.2" fill="#1D2A3E" text-anchor="start" letter-spacing="0">Weather Delay</text>
<rect x="439.6" y="1976.4" width="4.2" height="4.2" fill="#fff" stroke="#1D2A3E" stroke-width="1.8"/>
<rect x="439.6" y="1985.4" width="4.2" height="4.2" fill="#fff" stroke="#1D2A3E" stroke-width="1.8"/>
<rect x="439.6" y="1994.4" width="4.2" height="4.2" fill="#fff" stroke="#1D2A3E" stroke-width="1.8"/>
<circle cx="541.9" cy="1987.5" r="8" fill="#709DF7"/>
<text x="565.9" y="1996.1" font-size="25.2" fill="#1D2A3E" text-anchor="start" letter-spacing="0">Security Delay</text>
<rect x="914.6" y="1976.4" width="4.2" height="4.2" fill="#fff" stroke="#1D2A3E" stroke-width="1.8"/>
<rect x="914.6" y="1985.4" width="4.2" height="4.2" fill="#fff" stroke="#1D2A3E" stroke-width="1.8"/>
<rect x="914.6" y="1994.4" width="4.2" height="4.2" fill="#fff" stroke="#1D2A3E" stroke-width="1.8"/>
</svg>
<div style="position:absolute;left:1962.6px;top:271px;width:1890.7px;height:628.6px;overflow:hidden">
<div style="position:absolute;left:0;top:0;width:1890.7px;height:73px;background:#ECF1FA;border-bottom:2px solid #E3E8F2"></div>
<div style="position:absolute;left:0;top:75.0px;width:526.2px;height:70.0px;background:#fff;border-bottom:2px solid #E3E8F2"></div>
<div style="position:absolute;left:526.2px;top:75.0px;width:604.6px;height:70.5px;background:#E47C70"></div>
<div style="position:absolute;left:1130.8px;top:75.0px;width:759.9px;height:70.5px;background:#F7E1E0;border-bottom:1.5px solid #E9E4EA"></div>
<div style="position:absolute;left:0;top:147.0px;width:526.2px;height:70.0px;background:#fff;border-bottom:2px solid #E3E8F2"></div>
<div style="position:absolute;left:526.2px;top:147.0px;width:604.6px;height:70.5px;background:#E47C70"></div>
<div style="position:absolute;left:1130.8px;top:147.0px;width:759.9px;height:70.5px;background:#F7E1E0;border-bottom:1.5px solid #E9E4EA"></div>
<div style="position:absolute;left:0;top:219.0px;width:526.2px;height:70.0px;background:#fff;border-bottom:2px solid #E3E8F2"></div>
<div style="position:absolute;left:526.2px;top:219.0px;width:604.6px;height:70.5px;background:#EC978C"></div>
<div style="position:absolute;left:1130.8px;top:219.0px;width:759.9px;height:70.5px;background:#F7E1E0;border-bottom:1.5px solid #E9E4EA"></div>
<div style="position:absolute;left:0;top:291.0px;width:526.2px;height:70.0px;background:#fff;border-bottom:2px solid #E3E8F2"></div>
<div style="position:absolute;left:526.2px;top:291.0px;width:604.6px;height:70.5px;background:#EC978C"></div>
<div style="position:absolute;left:1130.8px;top:291.0px;width:759.9px;height:70.5px;background:#F4CAC5;border-bottom:1.5px solid #E9E4EA"></div>
<div style="position:absolute;left:0;top:363.0px;width:526.2px;height:70.0px;background:#fff;border-bottom:2px solid #E3E8F2"></div>
<div style="position:absolute;left:526.2px;top:363.0px;width:604.6px;height:70.5px;background:#EC978C"></div>
<div style="position:absolute;left:1130.8px;top:363.0px;width:759.9px;height:70.5px;background:#F7E1E0;border-bottom:1.5px solid #E9E4EA"></div>
<div style="position:absolute;left:0;top:435.0px;width:526.2px;height:70.0px;background:#fff;border-bottom:2px solid #E3E8F2"></div>
<div style="position:absolute;left:526.2px;top:435.0px;width:604.6px;height:70.5px;background:#F1AFA6"></div>
<div style="position:absolute;left:1130.8px;top:435.0px;width:759.9px;height:70.5px;background:#F7E1E0;border-bottom:1.5px solid #E9E4EA"></div>
<div style="position:absolute;left:0;top:507.0px;width:526.2px;height:70.0px;background:#fff;border-bottom:2px solid #E3E8F2"></div>
<div style="position:absolute;left:526.2px;top:507.0px;width:604.6px;height:70.5px;background:#F1AFA6"></div>
<div style="position:absolute;left:1130.8px;top:507.0px;width:759.9px;height:70.5px;background:#F4CAC5;border-bottom:1.5px solid #E9E4EA"></div>
<div style="position:absolute;left:0;top:579.0px;width:526.2px;height:70.0px;background:#fff;border-bottom:2px solid #E3E8F2"></div>
<div style="position:absolute;left:526.2px;top:579.0px;width:604.6px;height:70.5px;background:#F1AFA6"></div>
<div style="position:absolute;left:1130.8px;top:579.0px;width:759.9px;height:70.5px;background:#F7E1E0;border-bottom:1.5px solid #E9E4EA"></div>
</div>
<div style="position:absolute;left:1962.6px;top:900px;width:1890.7px;height:2px;background:#E3E8F2"></div>
<div style="position:absolute;left:0;top:0;width:3882px;height:899.6px;overflow:hidden">
<div class="t" style="left:1975.4px;top:293.3px;font-size:29.4px;font-weight:700;color:#1D2A3E;letter-spacing:-0.218px;">Top 1000 values of OriginCityName</div>
<div class="t" style="left:1773.8px;width:2000px;text-align:center;top:293.3px;font-size:29.4px;font-weight:700;color:#1D2A3E;">Delay %</div>
<div class="t" style="left:2472.5px;width:2000px;text-align:center;top:293.3px;font-size:29.4px;font-weight:700;color:#1D2A3E;">Cancel %</div>
<div class="t" style="left:1975.4px;top:366.3px;font-size:29.4px;font-weight:400;color:#1D2A3E;letter-spacing:0px;">Memphis</div>
<div class="t" style="left:1791.5px;width:2000px;text-align:center;top:366.3px;font-size:29.4px;font-weight:400;color:#05080F;letter-spacing:0.2px;">100%</div>
<div class="t" style="left:2472.8px;width:2000px;text-align:center;top:366.3px;font-size:29.4px;font-weight:400;color:#05080F;letter-spacing:0.2px;">0%</div>
<div class="t" style="left:1975.4px;top:438.3px;font-size:29.4px;font-weight:400;color:#1D2A3E;letter-spacing:0px;">Raleigh/Durham</div>
<div class="t" style="left:1791.5px;width:2000px;text-align:center;top:438.3px;font-size:29.4px;font-weight:400;color:#05080F;letter-spacing:0.2px;">100%</div>
<div class="t" style="left:2472.8px;width:2000px;text-align:center;top:438.3px;font-size:29.4px;font-weight:400;color:#05080F;letter-spacing:0.2px;">0%</div>
<div class="t" style="left:1975.4px;top:510.3px;font-size:29.4px;font-weight:400;color:#1D2A3E;letter-spacing:0px;">Buffalo</div>
<div class="t" style="left:1791.5px;width:2000px;text-align:center;top:510.3px;font-size:29.4px;font-weight:400;color:#05080F;letter-spacing:0.2px;">75%</div>
<div class="t" style="left:2472.8px;width:2000px;text-align:center;top:510.3px;font-size:29.4px;font-weight:400;color:#05080F;letter-spacing:0.2px;">0%</div>
<div class="t" style="left:1975.4px;top:582.3px;font-size:29.4px;font-weight:400;color:#1D2A3E;letter-spacing:0px;">Syracuse</div>
<div class="t" style="left:1791.5px;width:2000px;text-align:center;top:582.3px;font-size:29.4px;font-weight:400;color:#05080F;letter-spacing:0.2px;">75%</div>
<div class="t" style="left:2472.8px;width:2000px;text-align:center;top:582.3px;font-size:29.4px;font-weight:400;color:#05080F;letter-spacing:0.2px;">25%</div>
<div class="t" style="left:1975.4px;top:654.3px;font-size:29.4px;font-weight:400;color:#1D2A3E;letter-spacing:0px;">Birmingham</div>
<div class="t" style="left:1791.5px;width:2000px;text-align:center;top:654.3px;font-size:29.4px;font-weight:400;color:#05080F;letter-spacing:0.2px;">67%</div>
<div class="t" style="left:2472.8px;width:2000px;text-align:center;top:654.3px;font-size:29.4px;font-weight:400;color:#05080F;letter-spacing:0.2px;">0%</div>
<div class="t" style="left:1975.4px;top:726.3px;font-size:29.4px;font-weight:400;color:#1D2A3E;letter-spacing:0px;">Rochester</div>
<div class="t" style="left:1791.5px;width:2000px;text-align:center;top:726.3px;font-size:29.4px;font-weight:400;color:#05080F;letter-spacing:0.2px;">56%</div>
<div class="t" style="left:2472.8px;width:2000px;text-align:center;top:726.3px;font-size:29.4px;font-weight:400;color:#05080F;letter-spacing:0.2px;">0%</div>
<div class="t" style="left:1975.4px;top:798.3px;font-size:29.4px;font-weight:400;color:#1D2A3E;letter-spacing:0px;">Bangor</div>
<div class="t" style="left:1791.5px;width:2000px;text-align:center;top:798.3px;font-size:29.4px;font-weight:400;color:#05080F;letter-spacing:0.2px;">50%</div>
<div class="t" style="left:2472.8px;width:2000px;text-align:center;top:798.3px;font-size:29.4px;font-weight:400;color:#05080F;letter-spacing:0.2px;">17%</div>
<div class="t" style="left:1975.4px;top:870.3px;font-size:29.4px;font-weight:400;color:#1D2A3E;letter-spacing:0px;">Chicago/Rockford</div>
<div class="t" style="left:1791.5px;width:2000px;text-align:center;top:870.3px;font-size:29.4px;font-weight:400;color:#05080F;letter-spacing:0.2px;">50%</div>
<div class="t" style="left:2472.8px;width:2000px;text-align:center;top:870.3px;font-size:29.4px;font-weight:400;color:#05080F;letter-spacing:0.2px;">0%</div>
</div>
<svg style="position:absolute;left:3054px;top:297px" width="22" height="24" viewBox="0 0 22 24"><path d="M11 1.5v20M2 12.8 L11 21.8 L20 12.8" stroke="#1D2A3E" stroke-width="2" fill="none"/></svg>
<div class="box panel" style="left:1945px;top:932px;width:1927px;height:1108px;overflow:hidden">
<svg style="position:absolute;left:-1947px;top:-934px" width="3882" height="2048" viewBox="0 0 3882 2048">
<defs><clipPath id="mc"><rect x="1947" y="982" width="1922" height="1058"/></clipPath></defs>
<g clip-path="url(#mc)">
<rect x="1947" y="982" width="1922" height="1058" fill="#fff"/>
<polygon points="2075.0,982.0 2088.5,1030.0 2073.0,1063.0 2099.5,1089.8 2115.0,1107.5 2126.0,1129.5 2134.8,1162.6 2163.5,1195.8 2181.3,1210.9 2194.5,1239.6 2192.3,1257.3 2218.8,1281.5 2216.6,1299.2 2234.3,1316.9 2251.9,1324.6 2278.4,1321.3 2285.0,1334.5 2318.1,1341.1 2287.2,1352.2 2324.8,1358.8 2357.9,1358.8 2364.5,1367.6 2380.0,1398.5 2402.0,1419.5 2421.9,1411.8 2437.4,1433.9 2459.4,1444.9 2468.3,1429.4 2480.0,1458.0 2472.6,1482.4 2503.5,1507.0 2511.7,1523.6 2518.0,1554.6 2520.0,1571.0 2510.0,1592.0 2489.0,1565.0 2472.6,1559.7 2445.8,1559.7 2414.9,1552.5 2381.9,1540.0 2386.0,1571.0 2398.4,1589.6 2406.6,1616.4 2414.9,1647.3 2429.3,1655.5 2419.0,1665.8 2425.2,1680.0 2432.0,1700.0 2423.0,1712.0 2425.0,1725.0 2422.8,1810.0 2414.0,1895.0 2403.6,1938.0 2393.0,1980.0 2410.0,2036.0 2410.0,2044.0 1940.0,2044.0 1940.0,982.0" fill="#EAF0FD" />
<polyline points="2075.0,982.0 2088.5,1030.0 2073.0,1063.0 2099.5,1089.8 2115.0,1107.5 2126.0,1129.5 2134.8,1162.6 2163.5,1195.8 2181.3,1210.9 2194.5,1239.6 2192.3,1257.3 2218.8,1281.5 2216.6,1299.2 2234.3,1316.9 2251.9,1324.6 2278.4,1321.3 2285.0,1334.5 2318.1,1341.1 2287.2,1352.2 2324.8,1358.8 2357.9,1358.8 2364.5,1367.6 2380.0,1398.5 2402.0,1419.5 2421.9,1411.8 2437.4,1433.9 2459.4,1444.9 2468.3,1429.4 2480.0,1458.0 2472.6,1482.4 2503.5,1507.0 2511.7,1523.6 2518.0,1554.6 2520.0,1571.0 2510.0,1592.0 2489.0,1565.0 2472.6,1559.7 2445.8,1559.7 2414.9,1552.5 2381.9,1540.0 2386.0,1571.0 2398.4,1589.6 2406.6,1616.4 2414.9,1647.3 2429.3,1655.5 2419.0,1665.8 2425.2,1680.0 2432.0,1700.0 2423.0,1712.0 2425.0,1725.0 2422.8,1810.0 2414.0,1895.0 2403.6,1938.0 2393.0,1980.0 2410.0,2036.0" fill="none" stroke="#C9DAFB" stroke-width="2.2" stroke-linejoin="round" stroke-linecap="round" />
<polyline points="2181.3,1210.9 2207.8,1193.2 2238.7,1184.4 2245.3,1180.0" fill="none" stroke="#C9DAFB" stroke-width="6" stroke-linejoin="round" stroke-linecap="round" />
<polyline points="2181.3,1210.9 2207.8,1193.2 2238.7,1184.4 2245.3,1180.0" fill="none" stroke="#EAF0FD" stroke-width="3.6" stroke-linejoin="round" stroke-linecap="round" />
<polyline points="2245.3,1186.6 2260.8,1199.9 2274.0,1219.7" fill="none" stroke="#C9DAFB" stroke-width="6" stroke-linejoin="round" stroke-linecap="round" />
<polyline points="2245.3,1186.6 2260.8,1199.9 2274.0,1219.7" fill="none" stroke="#EAF0FD" stroke-width="3.6" stroke-linejoin="round" stroke-linecap="round" />
<polyline points="2207.8,1193.2 2210.0,1224.2 2207.8,1246.2 2216.6,1270.5" fill="none" stroke="#C9DAFB" stroke-width="6" stroke-linejoin="round" stroke-linecap="round" />
<polyline points="2207.8,1193.2 2210.0,1224.2 2207.8,1246.2 2216.6,1270.5" fill="none" stroke="#EAF0FD" stroke-width="3.6" stroke-linejoin="round" stroke-linecap="round" />
<polyline points="2218.8,1281.5 2232.1,1259.5 2249.7,1252.8 2276.2,1251.7" fill="none" stroke="#C9DAFB" stroke-width="6" stroke-linejoin="round" stroke-linecap="round" />
<polyline points="2218.8,1281.5 2232.1,1259.5 2249.7,1252.8 2276.2,1251.7" fill="none" stroke="#EAF0FD" stroke-width="3.6" stroke-linejoin="round" stroke-linecap="round" />
<polyline points="2278.4,1321.3 2285.0,1310.2" fill="none" stroke="#C9DAFB" stroke-width="6" stroke-linejoin="round" stroke-linecap="round" />
<polyline points="2278.4,1321.3 2285.0,1310.2" fill="none" stroke="#EAF0FD" stroke-width="3.6" stroke-linejoin="round" stroke-linecap="round" />
<polyline points="2285.0,1334.5 2291.7,1327.9" fill="none" stroke="#C9DAFB" stroke-width="6" stroke-linejoin="round" stroke-linecap="round" />
<polyline points="2285.0,1334.5 2291.7,1327.9" fill="none" stroke="#EAF0FD" stroke-width="3.6" stroke-linejoin="round" stroke-linecap="round" />
<polyline points="2287.2,1352.2 2318.1,1341.1" fill="none" stroke="#C9DAFB" stroke-width="6" stroke-linejoin="round" stroke-linecap="round" />
<polyline points="2287.2,1352.2 2318.1,1341.1" fill="none" stroke="#EAF0FD" stroke-width="3.6" stroke-linejoin="round" stroke-linecap="round" />
<polyline points="2357.9,1358.8 2371.1,1347.8 2375.5,1327.9" fill="none" stroke="#C9DAFB" stroke-width="6" stroke-linejoin="round" stroke-linecap="round" />
<polyline points="2357.9,1358.8 2371.1,1347.8 2375.5,1327.9" fill="none" stroke="#EAF0FD" stroke-width="3.6" stroke-linejoin="round" stroke-linecap="round" />
<polyline points="2333.6,1356.6 2338.0,1345.6" fill="none" stroke="#C9DAFB" stroke-width="6" stroke-linejoin="round" stroke-linecap="round" />
<polyline points="2333.6,1356.6 2338.0,1345.6" fill="none" stroke="#EAF0FD" stroke-width="3.6" stroke-linejoin="round" stroke-linecap="round" />
<polyline points="2421.9,1411.8 2430.7,1398.5 2432.9,1387.5 2426.3,1385.3" fill="none" stroke="#C9DAFB" stroke-width="6" stroke-linejoin="round" stroke-linecap="round" />
<polyline points="2421.9,1411.8 2430.7,1398.5 2432.9,1387.5 2426.3,1385.3" fill="none" stroke="#EAF0FD" stroke-width="3.6" stroke-linejoin="round" stroke-linecap="round" />
<polyline points="2437.4,1433.9 2446.2,1429.4" fill="none" stroke="#C9DAFB" stroke-width="6" stroke-linejoin="round" stroke-linecap="round" />
<polyline points="2437.4,1433.9 2446.2,1429.4" fill="none" stroke="#EAF0FD" stroke-width="3.6" stroke-linejoin="round" stroke-linecap="round" />
<polyline points="2459.4,1444.9 2468.3,1429.4" fill="none" stroke="#C9DAFB" stroke-width="6" stroke-linejoin="round" stroke-linecap="round" />
<polyline points="2459.4,1444.9 2468.3,1429.4" fill="none" stroke="#EAF0FD" stroke-width="3.6" stroke-linejoin="round" stroke-linecap="round" />
<polyline points="2161.4,1197.7 2160.3,1184.4" fill="none" stroke="#C9DAFB" stroke-width="6" stroke-linejoin="round" stroke-linecap="round" />
<polyline points="2161.4,1197.7 2160.3,1184.4" fill="none" stroke="#EAF0FD" stroke-width="3.6" stroke-linejoin="round" stroke-linecap="round" />
<polyline points="2176.9,1188.8 2179.1,1180.0" fill="none" stroke="#C9DAFB" stroke-width="6" stroke-linejoin="round" stroke-linecap="round" />
<polyline points="2176.9,1188.8 2179.1,1180.0" fill="none" stroke="#EAF0FD" stroke-width="3.6" stroke-linejoin="round" stroke-linecap="round" />
<polyline points="2185.7,1191.0 2187.9,1180.0" fill="none" stroke="#C9DAFB" stroke-width="6" stroke-linejoin="round" stroke-linecap="round" />
<polyline points="2185.7,1191.0 2187.9,1180.0" fill="none" stroke="#EAF0FD" stroke-width="3.6" stroke-linejoin="round" stroke-linecap="round" />
<polyline points="2198.9,1193.2 2203.4,1180.0" fill="none" stroke="#C9DAFB" stroke-width="6" stroke-linejoin="round" stroke-linecap="round" />
<polyline points="2198.9,1193.2 2203.4,1180.0" fill="none" stroke="#EAF0FD" stroke-width="3.6" stroke-linejoin="round" stroke-linecap="round" />
<polyline points="2088.5,1030.2 2075.2,1063.3 2095.1,1085.4 2112.8,1107.5" fill="none" stroke="#C9DAFB" stroke-width="6" stroke-linejoin="round" stroke-linecap="round" />
<polyline points="2088.5,1030.2 2075.2,1063.3 2095.1,1085.4 2112.8,1107.5" fill="none" stroke="#EAF0FD" stroke-width="3.6" stroke-linejoin="round" stroke-linecap="round" />
<polyline points="2165.8,1052.3 2143.7,1063.3 2134.8,1085.4 2139.3,1103.0 2165.8,1116.3 2174.6,1142.8 2194.4,1147.2" fill="none" stroke="#C9DAFB" stroke-width="6" stroke-linejoin="round" stroke-linecap="round" />
<polyline points="2165.8,1052.3 2143.7,1063.3 2134.8,1085.4 2139.3,1103.0 2165.8,1116.3 2174.6,1142.8 2194.4,1147.2" fill="none" stroke="#EAF0FD" stroke-width="3.6" stroke-linejoin="round" stroke-linecap="round" />
<polyline points="2165.8,1052.3 2159.1,1069.9 2174.6,1089.8 2192.2,1092.0 2205.5,1107.5" fill="none" stroke="#C9DAFB" stroke-width="6" stroke-linejoin="round" stroke-linecap="round" />
<polyline points="2165.8,1052.3 2159.1,1069.9 2174.6,1089.8 2192.2,1092.0 2205.5,1107.5" fill="none" stroke="#EAF0FD" stroke-width="3.6" stroke-linejoin="round" stroke-linecap="round" />
<polyline points="2143.7,1111.9 2137.1,1133.9 2143.7,1151.6 2150.3,1162.6" fill="none" stroke="#C9DAFB" stroke-width="6" stroke-linejoin="round" stroke-linecap="round" />
<polyline points="2143.7,1111.9 2137.1,1133.9 2143.7,1151.6 2150.3,1162.6" fill="none" stroke="#EAF0FD" stroke-width="3.6" stroke-linejoin="round" stroke-linecap="round" />
<polyline points="2198.9,1145.0 2190.0,1169.3 2185.6,1189.1" fill="none" stroke="#C9DAFB" stroke-width="6" stroke-linejoin="round" stroke-linecap="round" />
<polyline points="2198.9,1145.0 2190.0,1169.3 2185.6,1189.1" fill="none" stroke="#EAF0FD" stroke-width="3.6" stroke-linejoin="round" stroke-linecap="round" />
<polyline points="2161.3,1158.2 2161.3,1195.8" fill="none" stroke="#C9DAFB" stroke-width="6" stroke-linejoin="round" stroke-linecap="round" />
<polyline points="2161.3,1158.2 2161.3,1195.8" fill="none" stroke="#EAF0FD" stroke-width="3.6" stroke-linejoin="round" stroke-linecap="round" />
<polyline points="2179.0,1156.0 2176.8,1186.9" fill="none" stroke="#C9DAFB" stroke-width="6" stroke-linejoin="round" stroke-linecap="round" />
<polyline points="2179.0,1156.0 2176.8,1186.9" fill="none" stroke="#EAF0FD" stroke-width="3.6" stroke-linejoin="round" stroke-linecap="round" />
<polyline points="2205.5,1178.1 2198.9,1195.8" fill="none" stroke="#C9DAFB" stroke-width="6" stroke-linejoin="round" stroke-linecap="round" />
<polyline points="2205.5,1178.1 2198.9,1195.8" fill="none" stroke="#EAF0FD" stroke-width="3.6" stroke-linejoin="round" stroke-linecap="round" />
<polyline points="2183.4,1211.2 2209.9,1200.2 2238.6,1189.1 2249.6,1173.7 2258.5,1151.6" fill="none" stroke="#C9DAFB" stroke-width="6" stroke-linejoin="round" stroke-linecap="round" />
<polyline points="2183.4,1211.2 2209.9,1200.2 2238.6,1189.1 2249.6,1173.7 2258.5,1151.6" fill="none" stroke="#EAF0FD" stroke-width="3.6" stroke-linejoin="round" stroke-linecap="round" />
<polyline points="2245.2,1184.7 2262.9,1200.2 2273.9,1217.8" fill="none" stroke="#C9DAFB" stroke-width="6" stroke-linejoin="round" stroke-linecap="round" />
<polyline points="2245.2,1184.7 2262.9,1200.2 2273.9,1217.8" fill="none" stroke="#EAF0FD" stroke-width="3.6" stroke-linejoin="round" stroke-linecap="round" />
<polyline points="2209.9,1200.2 2207.7,1224.4" fill="none" stroke="#C9DAFB" stroke-width="6" stroke-linejoin="round" stroke-linecap="round" />
<polyline points="2209.9,1200.2 2207.7,1224.4" fill="none" stroke="#EAF0FD" stroke-width="3.6" stroke-linejoin="round" stroke-linecap="round" />
<polyline points="2216.5,1226.7 2209.9,1244.3 2216.5,1268.6" fill="none" stroke="#C9DAFB" stroke-width="6" stroke-linejoin="round" stroke-linecap="round" />
<polyline points="2216.5,1226.7 2209.9,1244.3 2216.5,1268.6" fill="none" stroke="#EAF0FD" stroke-width="3.6" stroke-linejoin="round" stroke-linecap="round" />
<polyline points="2194.4,1259.8 2201.1,1270.8" fill="none" stroke="#C9DAFB" stroke-width="6" stroke-linejoin="round" stroke-linecap="round" />
<polyline points="2194.4,1259.8 2201.1,1270.8" fill="none" stroke="#EAF0FD" stroke-width="3.6" stroke-linejoin="round" stroke-linecap="round" />
<polyline points="2218.7,1268.6 2238.6,1255.4 2276.1,1252.0" fill="none" stroke="#C9DAFB" stroke-width="6" stroke-linejoin="round" stroke-linecap="round" />
<polyline points="2218.7,1268.6 2238.6,1255.4 2276.1,1252.0" fill="none" stroke="#EAF0FD" stroke-width="3.6" stroke-linejoin="round" stroke-linecap="round" />
<polyline points="2042.1,983.8 2037.7,994.9" fill="none" stroke="#C9DAFB" stroke-width="6" stroke-linejoin="round" stroke-linecap="round" />
<polyline points="2042.1,983.8 2037.7,994.9" fill="none" stroke="#EAF0FD" stroke-width="3.6" stroke-linejoin="round" stroke-linecap="round" />
<polyline points="2070.8,983.8 2067.5,1003.7" fill="none" stroke="#C9DAFB" stroke-width="6" stroke-linejoin="round" stroke-linecap="round" />
<polyline points="2070.8,983.8 2067.5,1003.7" fill="none" stroke="#EAF0FD" stroke-width="3.6" stroke-linejoin="round" stroke-linecap="round" />
<polyline points="2609.6,1542.2 2618.9,1562.8 2631.2,1575.2 2645.7,1582.4" fill="none" stroke="#C9DAFB" stroke-width="6" stroke-linejoin="round" stroke-linecap="round" />
<polyline points="2609.6,1542.2 2618.9,1562.8 2631.2,1575.2 2645.7,1582.4" fill="none" stroke="#EAF0FD" stroke-width="3.6" stroke-linejoin="round" stroke-linecap="round" />
<polyline points="2462.3,1430.9 2466.4,1451.5" fill="none" stroke="#C9DAFB" stroke-width="6" stroke-linejoin="round" stroke-linecap="round" />
<polyline points="2462.3,1430.9 2466.4,1451.5" fill="none" stroke="#EAF0FD" stroke-width="3.6" stroke-linejoin="round" stroke-linecap="round" />
<polyline points="2482.9,1455.6 2474.6,1478.3" fill="none" stroke="#C9DAFB" stroke-width="6" stroke-linejoin="round" stroke-linecap="round" />
<polyline points="2482.9,1455.6 2474.6,1478.3" fill="none" stroke="#EAF0FD" stroke-width="3.6" stroke-linejoin="round" stroke-linecap="round" />
<polygon points="2183.5,1332.3 2210.0,1330.0 2238.7,1345.6 2274.0,1356.6 2316.0,1367.6 2338.0,1374.3 2353.5,1400.8 2369.0,1422.8 2371.1,1436.0 2384.4,1451.5 2415.3,1464.8 2440.0,1480.0 2447.0,1494.0 2456.0,1515.4 2452.0,1534.0 2421.0,1531.0 2394.3,1520.0 2361.3,1503.0 2352.0,1488.0 2373.0,1486.0 2379.0,1470.0 2362.0,1484.0 2338.6,1490.7 2329.2,1473.6 2316.0,1467.0 2298.3,1451.5 2282.8,1449.3 2280.6,1436.0 2260.8,1422.8 2260.8,1409.6 2247.5,1407.4 2234.3,1387.5 2210.0,1389.7 2203.4,1369.8 2207.8,1356.6 2194.5,1354.4 2181.3,1339.0" fill="#fff" stroke="#C9DAFB" stroke-width="2.2" stroke-linejoin="round"/>
<polygon points="2390.1,1424.7 2406.6,1435.0 2414.9,1444.3 2394.3,1433.0" fill="#fff" />
<polygon points="2400.4,1408.2 2414.9,1416.5 2435.5,1430.9 2445.8,1439.2 2431.3,1435.0 2406.6,1418.5" fill="#fff" />
<polygon points="2439.6,1482.4 2447.8,1490.7 2454.0,1507.2 2447.8,1503.0" fill="#fff" />
<polygon points="2468.4,1521.6 2474.6,1520.6 2474.6,1531.9 2469.5,1531.9" fill="#fff" />
<polygon points="2478.7,1515.4 2487.0,1513.3 2489.1,1521.6 2480.8,1521.6" fill="#fff" />
<polygon points="2493.2,1544.3 2503.5,1542.2 2509.7,1558.7 2503.5,1562.8" fill="#fff" />
<polygon points="2349.1,1369.8 2357.9,1372.1 2364.5,1391.9 2357.9,1391.9" fill="#fff" />
<polygon points="1947.2,1034.6 1964.9,1033.5 1969.3,1047.8 1958.2,1067.7 1947.2,1072.1" fill="#fff" stroke="#C9DAFB" stroke-width="1.5"/>
<polygon points="1947.2,1078.8 1969.3,1076.5 1967.1,1116.3 1947.2,1120.7" fill="#fff" stroke="#C9DAFB" stroke-width="1.5"/>
<polygon points="2055.4,1041.2 2066.4,1035.7 2074.1,1043.4 2068.6,1053.4 2058.7,1047.8" fill="#fff" stroke="#C9DAFB" stroke-width="1.5"/>
<polygon points="2065.3,1079.9 2073.0,1081.0 2099.5,1114.1 2095.1,1118.5 2077.5,1098.6" fill="#fff" stroke="#C9DAFB" stroke-width="1.5"/>
<polyline points="2377.8,1528.8 2443.7,1552.5 2464.3,1544.3 2460.2,1513.3 2476.7,1505.1 2458.1,1487.6" fill="none" stroke="#C3CCE2" stroke-width="3" stroke-linejoin="round" stroke-linecap="round" />
<polygon points="3873.2,1001.5 3853.3,1005.9 3848.9,1041.2 3862.1,1063.3 3844.4,1072.2 3800.3,1072.2 3795.9,1098.6 3789.2,1116.3 3800.3,1129.6 3831.2,1131.8 3806.9,1147.2 3813.5,1162.7 3831.2,1187.0 3844.4,1200.2 3853.3,1217.9 3873.2,1240.0" fill="#E8EFFE" stroke="#D6E3FC" stroke-width="2" stroke-linejoin="round"/>
<polygon points="3696.5,1092.0 3712.0,1081.0 3738.5,1078.8 3751.7,1089.8 3756.1,1107.5 3784.8,1103.1 3787.0,1129.6 3771.6,1129.6 3765.0,1120.7 3756.1,1127.4 3738.5,1116.3 3720.8,1107.5 3705.3,1100.9" fill="#E8EFFE" stroke="#D6E3FC" stroke-width="2" stroke-linejoin="round"/>
<polygon points="3685.5,1125.1 3698.7,1120.7 3718.6,1118.5 3742.9,1129.6 3767.2,1142.8 3769.4,1173.7 3765.0,1195.8 3758.3,1202.4 3760.5,1224.5 3765.0,1259.8 3749.5,1251.0 3740.7,1228.9 3738.5,1195.8 3749.5,1180.3 3742.9,1158.3 3734.0,1171.5 3723.0,1149.4 3712.0,1158.3 3698.7,1156.1 3692.1,1142.8" fill="#E8EFFE" stroke="#D6E3FC" stroke-width="2" stroke-linejoin="round"/>
<polygon points="3769.4,1202.4 3778.2,1209.0 3776.0,1231.1 3769.4,1233.3" fill="#E8EFFE" stroke="#D6E3FC" stroke-width="2" stroke-linejoin="round"/>
<polygon points="3760.5,1259.8 3771.6,1242.2 3793.7,1244.4 3818.0,1259.8 3815.7,1270.9 3787.0,1268.7 3776.0,1270.9 3765.0,1262.0" fill="#E8EFFE" stroke="#D6E3FC" stroke-width="2" stroke-linejoin="round"/>
<polygon points="3826.8,1257.6 3844.4,1240.0 3851.1,1244.4 3835.6,1266.5" fill="#E8EFFE" stroke="#D6E3FC" stroke-width="2" stroke-linejoin="round"/>
<polygon points="3678.8,1033.5 3696.5,1028.0 3700.9,1039.0 3687.7,1043.4" fill="#E8EFFE" stroke="#D6E3FC" stroke-width="2" stroke-linejoin="round"/>
<polygon points="3689.9,1014.7 3707.6,1012.5 3720.8,1019.2 3712.0,1030.2 3694.3,1023.6" fill="#E8EFFE" stroke="#D6E3FC" stroke-width="2" stroke-linejoin="round"/>
<polygon points="3725.2,1021.4 3740.7,1017.0 3760.5,1023.6 3742.9,1034.6 3747.3,1045.7 3740.7,1054.5 3729.6,1041.2" fill="#E8EFFE" stroke="#D6E3FC" stroke-width="2" stroke-linejoin="round"/>
<polygon points="3718.6,1047.9 3734.0,1045.7 3749.5,1058.9 3765.0,1036.8 3773.8,1039.0 3765.0,1058.9 3749.5,1069.9 3731.8,1076.6 3723.0,1061.1" fill="#E8EFFE" stroke="#D6E3FC" stroke-width="2" stroke-linejoin="round"/>
<polygon points="3612.6,992.7 3619.2,982.1 3634.7,982.1 3632.5,999.3 3623.6,1001.5" fill="#E8EFFE" stroke="#D6E3FC" stroke-width="2" stroke-linejoin="round"/>
<polygon points="3612.6,1041.2 3619.2,1028.0 3629.2,1028.0 3632.5,1045.7 3617.0,1045.7" fill="#E8EFFE" stroke="#D6E3FC" stroke-width="2" stroke-linejoin="round"/>
<polygon points="3533.1,1089.8 3544.2,1076.6 3561.8,1074.4 3564.0,1081.0 3555.2,1087.6 3537.5,1090.9" fill="#E8EFFE" stroke="#D6E3FC" stroke-width="2" stroke-linejoin="round"/>
<polygon points="3542.0,982.1 3557.4,982.1 3556.3,988.2 3548.6,989.4" fill="#E8EFFE" stroke="#D6E3FC" stroke-width="2" stroke-linejoin="round"/>
<polygon points="3851.1,988.2 3857.7,982.1 3873.2,982.1 3873.2,988.2 3857.7,990.5" fill="#E8EFFE" stroke="#D6E3FC" stroke-width="2" stroke-linejoin="round"/>
<polygon points="3738.8,1230.0 3746.7,1249.9 3758.6,1261.8 3774.5,1269.7 3794.4,1265.8 3802.4,1305.5 3810.3,1321.4 3818.2,1341.2 3826.2,1369.1 3830.2,1383.0 3842.1,1384.9 3858.0,1357.1 3846.1,1337.3 3834.1,1323.4 3818.2,1319.4 3816.3,1309.5 3826.2,1305.5 3830.2,1289.6 3820.2,1265.8 3814.3,1249.9 3798.4,1245.9 3778.5,1241.9 3774.5,1230.0" fill="#E8EFFE" stroke="#D6E3FC" stroke-width="2" stroke-linejoin="round"/>
<polygon points="3748.7,1277.7 3756.7,1273.7 3774.5,1293.6 3770.6,1303.5 3758.6,1301.5" fill="#E8EFFE" stroke="#D6E3FC" stroke-width="2" stroke-linejoin="round"/>
<polygon points="3826.2,1255.8 3838.1,1241.9 3852.0,1243.9 3834.1,1267.7" fill="#E8EFFE" stroke="#D6E3FC" stroke-width="2" stroke-linejoin="round"/>
<polygon points="3854.0,1230.0 3871.9,1230.0 3871.9,1237.9" fill="#E8EFFE" stroke="#D6E3FC" stroke-width="2" stroke-linejoin="round"/>
<polygon points="3426.3,996.0 3442.7,993.9 3444.8,1012.4 3434.5,1037.2 3426.3,1028.9" fill="#E8EFFE" stroke="#D6E3FC" stroke-width="2" stroke-linejoin="round"/>
<polygon points="3181.0,985.6 3195.4,981.9 3205.7,987.7 3195.4,1000.1 3183.1,996.0" fill="#E8EFFE" stroke="#D6E3FC" stroke-width="2" stroke-linejoin="round"/>
<polyline points="3306.7,1344.3 3331.4,1346.3 3356.2,1336.0 3368.5,1313.3 3380.9,1307.2 3393.3,1315.4" fill="none" stroke="#E8EFFE" stroke-width="7" stroke-linejoin="round" stroke-linecap="round" />
<polyline points="3370.6,1292.7 3380.9,1305.1" fill="none" stroke="#E8EFFE" stroke-width="7" stroke-linejoin="round" stroke-linecap="round" />
<polyline points="3536.3,1561.5 3574.5,1557.2 3608.6,1568.7 3625.6,1593.4 3651.1,1606.1 3689.4,1601.0" fill="none" stroke="#E8EFFE" stroke-width="7" stroke-linejoin="round" stroke-linecap="round" />
<polyline points="3608.6,1568.7 3612.8,1584.8" fill="none" stroke="#E8EFFE" stroke-width="7" stroke-linejoin="round" stroke-linecap="round" />
<polyline points="3310.8,1610.4 3319.3,1601.9 3344.9,1595.5 3378.9,1589.1 3395.9,1570.0 3404.4,1606.1" fill="none" stroke="#E8EFFE" stroke-width="7" stroke-linejoin="round" stroke-linecap="round" />
<polyline points="3714.9,1682.7 3721.3,1725.2 3731.9,1776.3 3721.3,1835.8 3685.1,1833.7" fill="none" stroke="#E8EFFE" stroke-width="7" stroke-linejoin="round" stroke-linecap="round" />
<polyline points="3721.3,1835.8 3727.7,1848.6" fill="none" stroke="#E8EFFE" stroke-width="7" stroke-linejoin="round" stroke-linecap="round" />
<polyline points="3783.0,1891.1 3787.2,1920.9" fill="none" stroke="#E8EFFE" stroke-width="5" stroke-linejoin="round" stroke-linecap="round" />
<ellipse cx="2968.4" cy="1577.2" rx="6" ry="14" fill="#E8EFFE" stroke="#DBE6FC" stroke-width="1" transform="rotate(-8 2968.4 1577.2)"/>
<ellipse cx="3178.1" cy="1852.8" rx="8" ry="9" fill="#E8EFFE" stroke="#DBE6FC" stroke-width="1" transform="rotate(0 3178.1 1852.8)"/>
<ellipse cx="3159.0" cy="1893.2" rx="3" ry="8" fill="#E8EFFE" stroke="#DBE6FC" stroke-width="1" transform="rotate(10 3159.0 1893.2)"/>
<ellipse cx="3297.2" cy="1940.0" rx="3" ry="8" fill="#E8EFFE" stroke="#DBE6FC" stroke-width="1" transform="rotate(0 3297.2 1940.0)"/>
<ellipse cx="2705.6" cy="1941.3" rx="16" ry="6" fill="#E8EFFE" stroke="#DBE6FC" stroke-width="1" transform="rotate(-14 2705.6 1941.3)"/>
<ellipse cx="2843.9" cy="1552.9" rx="9" ry="7" fill="#E8EFFE" stroke="#DBE6FC" stroke-width="1" transform="rotate(-30 2843.9 1552.9)"/>
<ellipse cx="2536.3" cy="2006.8" rx="5" ry="11" fill="#E8EFFE" stroke="#DBE6FC" stroke-width="1" transform="rotate(-10 2536.3 2006.8)"/>
<polyline points="2587.2,1000.1 2599.5,1020.7 2620.1,1037.2" fill="none" stroke="#C9DAFB" stroke-width="3" stroke-linejoin="round" stroke-linecap="round" />
<polyline points="2723.2,971.2 2714.9,1004.2" fill="none" stroke="#C9DAFB" stroke-width="3" stroke-linejoin="round" stroke-linecap="round" />
<polyline points="2694.3,1158.8 2760.3,1197.9 2776.8,1251.5" fill="none" stroke="#C9DAFB" stroke-width="3" stroke-linejoin="round" stroke-linecap="round" />
<polyline points="2756.2,1336.0 2747.9,1383.4 2764.4,1461.7" fill="none" stroke="#C9DAFB" stroke-width="3" stroke-linejoin="round" stroke-linecap="round" />
<path d="M2506.8 1018.6 C2502.0 1027.6 2499.2 1015.9 2492.3 1045.4 C2485.5 1075.0 2482.0 1074.3 2486.2 1107.2 C2490.3 1140.2 2495.1 1107.2 2504.7 1144.3 C2514.3 1181.4 2513.6 1184.2 2515.0 1218.5 C2516.4 1252.9 2506.8 1224.0 2508.8 1247.4 C2510.9 1270.8 2511.6 1262.5 2521.2 1288.6 C2530.8 1314.7 2532.9 1309.2 2537.7 1325.7 C2542.5 1342.2 2531.5 1324.3 2535.6 1338.1 C2539.8 1351.8 2541.1 1338.1 2550.1 1366.9 C2559.0 1395.8 2559.0 1393.0 2562.4 1424.6 C2565.9 1456.2 2567.2 1446.6 2560.4 1461.7 C2553.5 1476.9 2556.2 1463.1 2541.8 1470.0 C2527.4 1476.9 2525.3 1478.2 2517.1 1482.3" fill="none" stroke="#CFD6E3" stroke-width="1.8" stroke-linejoin="round" stroke-linecap="round" />
<path d="M2506.8 1018.6 C2521.2 1026.2 2524.6 1026.9 2550.1 1041.3 C2575.5 1055.7 2561.0 1045.4 2583.0 1061.9 C2605.0 1078.4 2589.9 1068.8 2616.0 1090.8 C2642.1 1112.7 2635.2 1112.7 2661.4 1127.9 C2687.5 1143.0 2673.7 1127.9 2694.3 1136.1 C2714.9 1144.3 2705.3 1133.4 2723.2 1152.6 C2741.0 1171.8 2730.1 1173.2 2747.9 1193.8 C2765.8 1214.4 2767.2 1207.5 2776.8 1214.4" fill="none" stroke="#CFD6E3" stroke-width="1.8" stroke-linejoin="round" stroke-linecap="round" />
<path d="M2911.1 1024.8 C2889.7 1026.2 2884.8 1019.3 2846.8 1028.9 C2808.9 1038.5 2816.6 1034.4 2797.4 1053.7 C2778.1 1072.9 2802.9 1066.0 2789.1 1086.6 C2775.4 1107.2 2769.9 1096.3 2756.2 1115.5 C2742.4 1134.7 2745.2 1123.7 2747.9 1144.3 C2750.7 1165.0 2754.8 1154.0 2764.4 1177.3 C2774.0 1200.7 2772.6 1202.1 2776.8 1214.4" fill="none" stroke="#CFD6E3" stroke-width="1.8" stroke-linejoin="round" stroke-linecap="round" />
<path d="M2721.1 1218.5 C2719.1 1229.5 2708.8 1224.0 2714.9 1251.5 C2721.1 1279.0 2724.6 1270.8 2739.7 1301.0 C2754.8 1331.2 2754.8 1317.5 2760.3 1342.2 C2765.8 1366.9 2753.4 1358.7 2756.2 1375.2 C2758.9 1391.7 2764.4 1386.2 2768.5 1391.7" fill="none" stroke="#CFD6E3" stroke-width="1.8" stroke-linejoin="round" stroke-linecap="round" />
<path d="M2735.5 1218.5 C2752.0 1232.3 2754.8 1229.5 2785.0 1259.8 C2815.2 1290.0 2802.9 1280.4 2826.2 1309.2 C2849.6 1338.1 2840.7 1323.7 2855.1 1346.3 C2869.5 1369.0 2864.7 1366.9 2869.5 1377.2" fill="none" stroke="#CFD6E3" stroke-width="1.8" stroke-linejoin="round" stroke-linecap="round" />
<path d="M2838.6 1218.5 C2841.3 1210.3 2835.9 1204.8 2846.8 1193.8 C2857.8 1182.8 2850.1 1186.9 2871.6 1185.6 C2893.0 1184.2 2898.0 1188.3 2911.1 1189.7" fill="none" stroke="#CFD6E3" stroke-width="1.8" stroke-linejoin="round" stroke-linecap="round" />
<path d="M2177.0 981.9 C2172.2 986.6 2174.3 989.2 2162.6 996.0 C2150.9 1002.7 2148.8 1000.1 2142.0 1002.1" fill="none" stroke="#CFD6E3" stroke-width="1.8" stroke-linejoin="round" stroke-linecap="round" />
<path d="M2911.0 1018.6 C2920.6 1013.8 2925.4 1016.4 2939.9 1004.2 C2954.3 992.0 2949.5 989.4 2954.3 981.9" fill="none" stroke="#CFD6E3" stroke-width="1.8" stroke-linejoin="round" stroke-linecap="round" />
<path d="M3026.4 1053.7 C3030.5 1048.9 3025.0 1044.0 3038.8 1039.2 C3052.5 1034.4 3048.4 1033.1 3067.6 1039.2 C3086.9 1045.4 3077.3 1049.5 3096.5 1057.8 C3115.7 1066.0 3107.5 1064.7 3125.3 1064.0 C3143.2 1063.3 3132.2 1053.0 3150.1 1055.7 C3167.9 1058.5 3156.9 1062.6 3178.9 1072.2 C3200.9 1081.8 3200.9 1076.3 3216.0 1084.6 C3231.1 1092.8 3213.3 1086.6 3224.3 1096.9 C3235.3 1107.2 3228.4 1096.9 3249.0 1115.5 C3269.6 1134.0 3266.9 1133.4 3286.1 1152.6 C3305.3 1171.8 3288.9 1159.5 3306.7 1173.2 C3324.6 1186.9 3321.8 1188.3 3339.7 1193.8 C3357.6 1199.3 3347.9 1200.7 3360.3 1189.7 C3372.7 1178.7 3360.3 1184.2 3376.8 1160.8 C3393.3 1137.5 3386.4 1135.4 3409.8 1119.6 C3433.1 1103.8 3427.6 1115.5 3446.9 1113.4 C3466.1 1111.4 3456.5 1111.4 3467.5 1113.4 C3478.5 1115.5 3463.3 1121.7 3479.8 1119.6 C3496.3 1117.6 3497.7 1118.2 3516.9 1107.2 C3536.2 1096.3 3518.3 1101.8 3537.5 1086.6 C3556.8 1071.5 3558.2 1078.4 3574.6 1061.9 C3591.1 1045.4 3574.6 1044.0 3587.0 1037.2 C3599.4 1030.3 3593.9 1035.8 3611.7 1041.3 C3629.6 1046.8 3622.7 1053.7 3640.6 1053.7 C3658.5 1053.7 3648.8 1039.9 3665.3 1041.3 C3681.8 1042.7 3668.1 1046.8 3690.1 1057.8 C3712.0 1068.8 3717.5 1068.8 3731.3 1074.3" fill="none" stroke="#CFD6E3" stroke-width="1.8" stroke-linejoin="round" stroke-linecap="round" />
<path d="M3467.5 1113.4 C3459.2 1119.6 3462.0 1120.3 3442.7 1132.0 C3423.5 1143.7 3422.8 1130.6 3409.8 1148.5 C3396.7 1166.3 3411.8 1165.0 3403.6 1185.6 C3395.3 1206.2 3395.3 1195.2 3385.0 1210.3 C3374.7 1225.4 3376.8 1217.2 3372.7 1230.9 C3368.5 1244.6 3378.2 1237.8 3372.7 1251.5 C3367.2 1265.3 3357.6 1258.4 3356.2 1272.1 C3354.8 1285.9 3361.7 1280.4 3368.5 1292.7 C3375.4 1305.1 3379.5 1298.2 3376.8 1309.2 C3374.0 1320.2 3369.9 1316.1 3360.3 1325.7 C3350.7 1335.3 3365.8 1331.9 3347.9 1338.1 C3330.1 1344.3 3325.9 1344.3 3306.7 1344.3 C3287.5 1344.3 3301.2 1345.6 3290.2 1338.1 C3279.2 1330.5 3286.1 1329.1 3273.7 1321.6 C3261.4 1314.0 3279.2 1315.4 3253.1 1315.4 C3227.0 1315.4 3216.0 1314.7 3195.4 1321.6 C3174.8 1328.5 3198.2 1326.4 3191.3 1336.0 C3184.4 1345.6 3185.8 1340.1 3174.8 1350.4 C3163.8 1360.8 3163.8 1354.6 3158.3 1366.9 C3152.8 1379.3 3166.6 1377.2 3158.3 1387.5 C3150.1 1397.8 3151.5 1391.0 3133.6 1397.8 C3115.7 1404.7 3114.4 1408.8 3104.7 1408.2 C3095.1 1407.5 3114.4 1405.4 3104.7 1395.8 C3095.1 1386.2 3092.4 1398.5 3075.9 1379.3 C3059.4 1360.1 3071.8 1353.9 3055.3 1338.1 C3038.8 1322.3 3047.0 1335.3 3026.4 1331.9 C3005.8 1328.5 3011.3 1332.6 2993.4 1327.8 C2975.6 1323.0 2992.1 1327.8 2972.8 1317.5 C2953.6 1307.2 2956.3 1301.0 2935.7 1296.9 C2915.1 1292.7 2919.2 1302.4 2911.0 1305.1" fill="none" stroke="#CFD6E3" stroke-width="1.8" stroke-linejoin="round" stroke-linecap="round" />
<path d="M2911.0 1127.9 C2917.9 1121.0 2922.7 1118.2 2931.6 1107.2 C2940.5 1096.3 2935.7 1099.0 2937.8 1094.9" fill="none" stroke="#CFD6E3" stroke-width="1.8" stroke-linejoin="round" stroke-linecap="round" />
<path d="M2911.0 1160.8 C2913.7 1170.5 2919.2 1178.7 2919.2 1189.7 C2919.2 1200.7 2913.7 1192.4 2911.0 1193.8" fill="none" stroke="#CFD6E3" stroke-width="1.8" stroke-linejoin="round" stroke-linecap="round" />
<path d="M2646.1 1565.7 C2640.4 1574.9 2631.9 1568.5 2629.1 1593.4 C2626.2 1618.2 2631.9 1613.2 2637.6 1640.1 C2643.2 1667.1 2634.7 1661.4 2646.1 1674.2 C2657.4 1686.9 2658.8 1665.7 2671.6 1678.4 C2684.4 1691.2 2674.4 1696.9 2684.4 1712.5 C2694.3 1728.0 2700.0 1718.1 2701.4 1725.2 C2702.8 1732.3 2708.5 1728.0 2688.6 1733.7 C2668.8 1739.4 2678.7 1733.7 2641.8 1742.2 C2605.0 1750.7 2613.5 1753.6 2578.0 1759.2 C2542.6 1764.9 2563.8 1756.4 2535.5 1759.2 C2507.1 1762.1 2507.1 1764.9 2493.0 1767.7" fill="none" stroke="#CFD6E3" stroke-width="1.8" stroke-linejoin="round" stroke-linecap="round" />
<path d="M2646.1 1565.7 C2663.1 1565.0 2668.8 1558.6 2697.1 1563.6 C2725.5 1568.5 2714.1 1597.6 2731.2 1580.6 C2748.2 1563.6 2728.3 1543.7 2748.2 1512.5 C2768.0 1481.3 2776.5 1495.5 2790.7 1487.0" fill="none" stroke="#CFD6E3" stroke-width="1.8" stroke-linejoin="round" stroke-linecap="round" />
<path d="M2688.6 1712.5 C2701.4 1703.9 2698.5 1699.7 2726.9 1686.9 C2755.3 1674.2 2751.0 1672.8 2773.7 1674.2 C2796.4 1675.6 2782.2 1674.2 2795.0 1691.2 C2807.7 1708.2 2797.8 1701.1 2812.0 1725.2 C2826.1 1749.3 2843.2 1721.0 2837.5 1763.5 C2831.8 1806.0 2803.5 1814.5 2795.0 1852.8 C2786.4 1891.1 2808.4 1858.5 2812.0 1878.3 C2815.5 1898.2 2798.5 1891.1 2805.6 1912.4 C2812.7 1933.6 2814.1 1925.1 2833.2 1942.1 C2852.4 1959.2 2837.1 1954.9 2863.0 1963.4 C2889.0 1971.9 2895.1 1966.2 2911.1 1967.7" fill="none" stroke="#CFD6E3" stroke-width="1.8" stroke-linejoin="round" stroke-linecap="round" />
<path d="M2488.7 1784.8 C2483.0 1797.5 2480.2 1800.4 2471.7 1823.0 C2463.2 1845.7 2461.8 1830.1 2463.2 1852.8 C2464.6 1875.5 2461.8 1871.2 2475.9 1891.1 C2490.1 1910.9 2494.4 1901.0 2505.7 1912.4 C2517.1 1923.7 2502.9 1918.7 2510.0 1925.1 C2517.1 1931.5 2521.3 1929.4 2527.0 1931.5" fill="none" stroke="#CFD6E3" stroke-width="1.8" stroke-linejoin="round" stroke-linecap="round" />
<path d="M2535.5 1997.4 C2544.0 1998.9 2541.9 1997.4 2561.0 2001.7 C2580.2 2005.9 2582.3 2007.4 2592.9 2010.2" fill="none" stroke="#CFD6E3" stroke-width="1.8" stroke-linejoin="round" stroke-linecap="round" />
<path d="M2416.4 1710.3 C2427.7 1711.7 2429.2 1709.6 2450.4 1714.6 C2471.7 1719.5 2466.0 1708.9 2480.2 1725.2 C2494.4 1741.5 2488.7 1750.7 2493.0 1763.5" fill="none" stroke="#CFD6E3" stroke-width="1.8" stroke-linejoin="round" stroke-linecap="round" />
<path d="M2769.4 1470.0 C2775.1 1474.3 2779.4 1468.6 2786.4 1482.8 C2793.5 1496.9 2789.3 1502.6 2790.7 1512.5" fill="none" stroke="#CFD6E3" stroke-width="1.8" stroke-linejoin="round" stroke-linecap="round" />
<path d="M3132.2 1597.6 C3149.2 1587.7 3163.4 1572.1 3183.2 1567.8 C3203.1 1563.6 3180.4 1577.8 3191.7 1584.8 C3203.1 1591.9 3197.4 1588.4 3217.3 1589.1 C3237.1 1589.8 3235.7 1584.1 3251.3 1587.0 C3266.9 1589.8 3244.2 1591.9 3264.0 1597.6 C3283.9 1603.3 3272.5 1611.1 3310.8 1604.0 C3349.1 1596.9 3350.5 1589.1 3378.9 1576.3 C3407.2 1563.6 3364.7 1571.4 3395.9 1565.7 C3427.1 1560.0 3425.7 1557.9 3472.5 1559.3 C3519.3 1560.7 3502.2 1570.7 3536.3 1570.0 C3570.3 1569.2 3550.4 1557.9 3574.5 1557.2 C3598.7 1556.5 3591.6 1555.8 3608.6 1567.8 C3625.6 1579.9 3605.7 1579.2 3625.6 1593.4 C3645.4 1607.5 3645.4 1597.6 3668.1 1610.4 C3690.8 1623.1 3683.7 1616.0 3693.6 1631.6 C3703.6 1647.2 3689.4 1640.1 3697.9 1657.2 C3706.4 1674.2 3710.7 1657.2 3719.2 1682.7 C3727.7 1708.2 3719.2 1702.5 3723.4 1733.7 C3727.7 1764.9 3733.3 1742.2 3731.9 1776.3 C3730.5 1810.3 3710.7 1803.2 3719.2 1835.8 C3727.7 1868.4 3736.2 1854.2 3757.4 1874.1 C3778.7 1893.9 3770.2 1876.9 3783.0 1895.4 C3795.7 1913.8 3791.5 1918.0 3795.7 1929.4" fill="none" stroke="#CFD6E3" stroke-width="1.8" stroke-linejoin="round" stroke-linecap="round" />
<path d="M3085.4 1652.9 C3093.9 1668.5 3101.0 1675.6 3110.9 1699.7 C3120.8 1723.8 3118.7 1699.7 3115.2 1725.2 C3111.6 1750.7 3101.7 1745.1 3100.3 1776.3 C3098.9 1807.4 3098.9 1798.9 3110.9 1818.8 C3123.0 1838.6 3122.3 1830.8 3136.4 1835.8 C3150.6 1840.8 3147.8 1834.4 3153.5 1833.7" fill="none" stroke="#CFD6E3" stroke-width="1.8" stroke-linejoin="round" stroke-linecap="round" />
<path d="M3081.1 1910.2 C3085.4 1909.5 3082.6 1904.6 3093.9 1908.1 C3105.2 1911.7 3102.4 1909.5 3115.2 1920.9 C3127.9 1932.2 3120.8 1936.5 3132.2 1942.1 C3143.5 1947.8 3142.1 1949.2 3149.2 1937.9 C3156.3 1926.5 3149.9 1923.7 3153.5 1908.1 C3157.0 1892.5 3157.7 1896.8 3159.8 1891.1" fill="none" stroke="#CFD6E3" stroke-width="1.8" stroke-linejoin="round" stroke-linecap="round" />
<path d="M2911.0 1967.7 C2919.5 1976.2 2919.5 1982.5 2936.5 1993.2 C2953.5 2003.8 2945.0 1999.6 2962.0 1999.6 C2979.1 1999.6 2967.7 1996.0 2987.6 1993.2 C3007.4 1990.3 3000.3 2001.0 3021.6 1991.1 C3042.9 1981.1 3041.4 1972.6 3051.4 1963.4" fill="none" stroke="#CFD6E3" stroke-width="1.8" stroke-linejoin="round" stroke-linecap="round" />
<path d="M2360.4 1428.8 C2368.1 1435.9 2371.7 1444.6 2389.3 1455.6 C2406.9 1466.5 2407.7 1470.0 2426.4 1470.0 C2445.1 1470.0 2442.9 1456.7 2459.4 1455.6 C2475.9 1454.5 2472.8 1458.7 2488.2 1465.9 C2503.6 1473.0 2499.5 1484.5 2517.1 1482.3 C2534.7 1480.2 2538.8 1465.3 2554.2 1457.6 C2569.6 1449.9 2562.7 1472.2 2574.8 1453.5 C2586.9 1434.8 2590.7 1412.8 2599.5 1387.5 C2608.3 1362.3 2603.4 1370.2 2607.8 1358.7 C2612.2 1347.1 2605.0 1348.7 2616.0 1344.3 C2627.0 1339.9 2632.5 1346.6 2649.0 1342.2 C2665.5 1337.8 2670.1 1331.6 2677.8 1327.8" fill="none" stroke="#F5DDC4" stroke-width="1.8" stroke-linejoin="round" stroke-linecap="round" />
<path d="M2607.8 1406.1 C2611.1 1407.2 2611.3 1409.7 2620.1 1410.2 C2628.9 1410.8 2629.7 1406.0 2640.7 1408.2 C2651.7 1410.4 2655.9 1415.7 2661.4 1418.5" fill="none" stroke="#F5DDC4" stroke-width="1.8" stroke-linejoin="round" stroke-linecap="round" />
<path d="M2879.8 1301.0 C2883.1 1299.9 2883.8 1295.2 2892.2 1296.9 C2900.5 1298.5 2906.1 1304.4 2911.1 1307.2" fill="none" stroke="#F5DDC4" stroke-width="1.8" stroke-linejoin="round" stroke-linecap="round" />
<path d="M2992.2 1167.0 C2989.8 1174.2 2985.6 1181.2 2983.1 1193.8 C2980.7 1206.4 2986.1 1203.4 2983.1 1214.4 C2980.2 1225.4 2975.0 1229.5 2972.0 1235.0" fill="none" stroke="#F5DDC4" stroke-width="1.8" stroke-linejoin="round" stroke-linecap="round" />
<path d="M2972.0 1259.8 C2972.2 1270.8 2971.5 1283.4 2972.8 1301.0 C2974.1 1318.6 2974.2 1312.0 2977.0 1325.7 C2979.7 1339.5 2981.5 1345.4 2983.1 1352.5" fill="none" stroke="#F5DDC4" stroke-width="1.8" stroke-linejoin="round" stroke-linecap="round" />
<polyline points="2911.0,1307.2 2927.5,1298.9" fill="none" stroke="#F5DDC4" stroke-width="1.8" stroke-linejoin="round" stroke-linecap="round" />
<path d="M2493.0 1478.5 C2497.5 1487.6 2503.2 1488.7 2510.0 1512.5 C2516.8 1536.4 2526.4 1529.3 2518.5 1567.8 C2510.5 1606.4 2489.8 1619.7 2480.2 1657.2 C2470.6 1694.6 2480.1 1683.2 2482.3 1708.2 C2484.6 1733.2 2485.9 1730.3 2488.7 1750.7 C2491.5 1771.1 2496.4 1768.9 2493.0 1784.8 C2489.6 1800.6 2481.6 1785.3 2475.9 1810.3 C2470.3 1835.2 2475.1 1850.0 2471.7 1878.3 C2468.3 1906.7 2466.6 1889.4 2463.2 1916.6 C2459.8 1943.8 2455.5 1956.6 2458.9 1980.4 C2462.3 2004.2 2465.7 1991.2 2475.9 2005.9 C2486.2 2020.7 2491.5 2027.8 2497.2 2035.7" fill="none" stroke="#F5DDC4" stroke-width="1.8" stroke-linejoin="round" stroke-linecap="round" />
<path d="M2556.8 1616.7 C2568.1 1623.0 2582.3 1629.4 2599.3 1640.1 C2616.3 1650.9 2617.2 1643.5 2620.6 1657.2 C2624.0 1670.8 2603.0 1675.9 2612.1 1691.2 C2621.1 1706.5 2635.3 1708.9 2654.6 1714.6 C2673.9 1720.2 2676.4 1713.0 2684.4 1712.5" fill="none" stroke="#F5DDC4" stroke-width="1.8" stroke-linejoin="round" stroke-linecap="round" />
<path d="M2620.6 1655.0 C2627.4 1651.6 2617.7 1645.7 2646.1 1642.3 C2674.4 1638.9 2697.4 1647.4 2726.9 1642.3 C2756.4 1637.2 2748.7 1628.2 2756.7 1623.1" fill="none" stroke="#F5DDC4" stroke-width="1.8" stroke-linejoin="round" stroke-linecap="round" />
<path d="M2514.2 1763.5 C2531.2 1762.4 2538.3 1764.3 2578.0 1759.2 C2617.7 1754.1 2625.7 1743.2 2663.1 1744.4 C2700.5 1745.5 2695.7 1750.4 2718.4 1763.5 C2741.1 1776.5 2735.7 1775.1 2748.2 1793.3 C2760.6 1811.4 2752.7 1812.3 2765.2 1831.5 C2777.7 1850.8 2782.5 1848.6 2795.0 1865.6 C2807.4 1882.6 2801.8 1881.7 2812.0 1895.4 C2822.2 1909.0 2818.5 1903.0 2833.2 1916.6 C2848.0 1930.2 2851.4 1932.8 2867.3 1946.4 C2883.1 1960.0 2881.1 1962.6 2892.8 1967.7 C2904.5 1972.8 2906.2 1966.1 2911.1 1965.5" fill="none" stroke="#F5DDC4" stroke-width="1.8" stroke-linejoin="round" stroke-linecap="round" />
<polyline points="2684.4,1712.5 2680.1,1742.2" fill="none" stroke="#F5DDC4" stroke-width="1.8" stroke-linejoin="round" stroke-linecap="round" />
<path d="M2816.2 1593.4 C2823.0 1596.8 2825.9 1601.6 2841.7 1606.1 C2857.6 1610.6 2857.3 1605.8 2875.8 1610.4 C2894.3 1614.9 2901.7 1619.7 2911.1 1623.1" fill="none" stroke="#F5DDC4" stroke-width="1.8" stroke-linejoin="round" stroke-linecap="round" />
<polyline points="2726.9,1642.3 2714.1,1665.7" fill="none" stroke="#F5DDC4" stroke-width="1.8" stroke-linejoin="round" stroke-linecap="round" />
<polyline points="2697.1,1695.4 2705.6,1678.4" fill="none" stroke="#F5DDC4" stroke-width="1.8" stroke-linejoin="round" stroke-linecap="round" />
<path d="M3087.5 1489.1 C3088.7 1497.6 3091.8 1503.5 3091.8 1521.0 C3091.8 1538.6 3083.6 1534.7 3087.5 1555.1 C3091.5 1575.5 3102.7 1578.3 3106.7 1597.6 C3110.6 1616.9 3109.8 1612.6 3102.4 1627.4 C3095.0 1642.1 3083.6 1635.9 3079.0 1652.9 C3074.5 1669.9 3090.5 1671.9 3085.4 1691.2 C3080.3 1710.5 3067.2 1713.3 3059.9 1725.2 C3052.5 1737.1 3058.3 1733.0 3057.7 1735.8" fill="none" stroke="#F5DDC4" stroke-width="1.8" stroke-linejoin="round" stroke-linecap="round" />
<path d="M2911.0 1629.5 C2917.8 1634.6 2916.1 1636.7 2936.5 1648.6 C2956.9 1660.6 2960.3 1662.8 2987.6 1674.2 C3014.8 1685.5 3023.9 1677.6 3038.6 1691.2 C3053.4 1704.8 3037.8 1713.3 3042.9 1725.2 C3048.0 1737.1 3044.1 1731.9 3057.7 1735.8 C3071.4 1739.8 3076.3 1737.3 3093.9 1740.1 C3111.5 1742.9 3110.1 1741.4 3123.7 1746.5 C3137.3 1751.6 3131.3 1757.0 3144.9 1759.2 C3158.6 1761.5 3160.0 1758.4 3174.7 1755.0 C3189.5 1751.6 3186.6 1745.3 3200.2 1746.5 C3213.8 1747.6 3212.1 1754.7 3225.8 1759.2 C3239.4 1763.8 3233.1 1770.3 3251.3 1763.5 C3269.4 1756.7 3268.9 1747.3 3293.8 1733.7 C3318.8 1720.1 3316.5 1718.7 3344.9 1712.5 C3373.2 1706.2 3377.5 1716.0 3400.2 1710.3 C3422.8 1704.7 3414.0 1704.2 3429.9 1691.2 C3445.8 1678.1 3445.0 1674.5 3459.7 1661.4 C3474.4 1648.4 3468.2 1643.4 3485.2 1642.3 C3502.2 1641.1 3495.1 1652.1 3523.5 1657.2 C3551.9 1662.3 3555.3 1659.7 3591.6 1661.4 C3627.9 1663.1 3614.2 1663.5 3659.6 1663.5 C3705.0 1663.5 3705.6 1663.1 3761.7 1661.4 C3817.8 1659.7 3841.2 1658.3 3870.2 1657.2" fill="none" stroke="#F5DDC4" stroke-width="1.8" stroke-linejoin="round" stroke-linecap="round" />
<path d="M3310.8 1750.7 C3316.5 1751.9 3324.2 1744.8 3332.1 1755.0 C3340.0 1765.2 3337.2 1774.3 3340.6 1789.0 C3344.0 1803.8 3339.2 1801.2 3344.9 1810.3 C3350.5 1819.4 3353.9 1810.6 3361.9 1823.0 C3369.8 1835.5 3366.7 1844.6 3374.6 1857.1 C3382.6 1869.5 3379.2 1865.3 3391.6 1869.8 C3404.1 1874.4 3398.7 1875.2 3421.4 1874.1 C3444.1 1872.9 3449.5 1872.9 3476.7 1865.6 C3503.9 1858.2 3504.2 1849.8 3523.5 1846.4 C3542.8 1843.0 3536.5 1843.7 3549.0 1852.8 C3561.5 1861.9 3547.6 1868.0 3570.3 1880.5 C3593.0 1892.9 3600.1 1895.6 3634.1 1899.6 C3668.1 1903.6 3661.6 1895.4 3697.9 1895.4 C3734.2 1895.4 3724.3 1895.1 3770.2 1899.6 C3816.1 1904.1 3843.5 1909.0 3870.2 1912.4" fill="none" stroke="#F5DDC4" stroke-width="1.8" stroke-linejoin="round" stroke-linecap="round" />
<path d="M3376.8 1861.3 C3377.9 1874.9 3376.5 1893.1 3381.0 1912.4 C3385.5 1931.6 3390.9 1923.4 3393.8 1933.6 C3396.6 1943.8 3392.2 1946.1 3391.6 1950.6" fill="none" stroke="#F5DDC4" stroke-width="1.8" stroke-linejoin="round" stroke-linecap="round" />
<path d="M3042.9 1725.2 C3044.0 1736.6 3048.8 1745.1 3047.1 1767.7 C3045.4 1790.4 3035.3 1791.0 3036.5 1810.3 C3037.6 1829.6 3041.7 1828.7 3051.4 1840.1 C3061.0 1851.4 3067.5 1838.1 3072.6 1852.8 C3077.7 1867.6 3068.2 1876.1 3070.5 1895.4 C3072.8 1914.6 3086.2 1908.1 3081.1 1925.1 C3076.0 1942.1 3070.6 1941.0 3051.4 1959.2 C3032.1 1977.3 3034.9 1983.0 3008.8 1993.2 C2982.7 2003.4 2979.6 2004.2 2953.5 1997.4 C2927.4 1990.6 2922.3 1975.6 2911.0 1967.7" fill="none" stroke="#F5DDC4" stroke-width="1.8" stroke-linejoin="round" stroke-linecap="round" />
<polyline points="3072.6,1993.2 3070.5,2037.8" fill="none" stroke="#F5DDC4" stroke-width="1.8" stroke-linejoin="round" stroke-linecap="round" />
<polyline points="3000.3,1997.4 3036.5,2037.8" fill="none" stroke="#F5DDC4" stroke-width="1.8" stroke-linejoin="round" stroke-linecap="round" />
<polyline points="3459.7,2014.4 3472.5,2037.8" fill="none" stroke="#F5DDC4" stroke-width="1.8" stroke-linejoin="round" stroke-linecap="round" />
<polyline points="2642.0,981.9 2642.0,1057.8 2655.2,1074.3 2646.9,1082.5 2661.4,1103.1 2677.8,1103.1 2698.5,1119.6 2710.8,1123.7 2723.2,1144.3 2735.5,1169.1 2743.8,1191.7 2764.4,1193.8 2780.9,1214.4 2801.5,1226.8 2813.9,1249.5 2830.4,1247.4 2846.8,1272.1 2867.5,1294.8 2883.9,1321.6 2900.4,1346.3 2911.1,1350.4" fill="none" stroke="#A3A3A8" stroke-width="1.2" stroke-linejoin="round" stroke-linecap="round" stroke-dasharray="2 1.5"/>
<polyline points="2911.0,1350.4 2925.4,1366.9 2935.7,1399.9 2933.7,1437.0 2944.0,1461.7 2968.7,1486.5" fill="none" stroke="#A3A3A8" stroke-width="1.2" stroke-linejoin="round" stroke-linecap="round" stroke-dasharray="2 1.5"/>
<polyline points="3194.6,982.0 3194.6,1487.0" fill="none" stroke="#A3A3A8" stroke-width="1.2" stroke-linejoin="round" stroke-linecap="round" stroke-dasharray="2 1.5"/>
<polyline points="3642.7,982.0 3671.5,1487.0" fill="none" stroke="#A3A3A8" stroke-width="1.2" stroke-linejoin="round" stroke-linecap="round" stroke-dasharray="2 1.5"/>
<polyline points="2805.6,1489.1 2805.6,1731.6" fill="none" stroke="#A3A3A8" stroke-width="1.2" stroke-linejoin="round" stroke-linecap="round" stroke-dasharray="2 1.5"/>
<polyline points="2697.1,1731.6 2815.4,1731.6" fill="none" stroke="#A3A3A8" stroke-width="1.2" stroke-linejoin="round" stroke-linecap="round" stroke-dasharray="2 1.5"/>
<polyline points="2806.4,1912.4 2806.4,2040.0" fill="none" stroke="#A3A3A8" stroke-width="1.2" stroke-linejoin="round" stroke-linecap="round" stroke-dasharray="2 1.5"/>
<polyline points="2860.9,1489.1 2860.9,1570.0 2875.8,1597.6 2911.1,1644.4" fill="none" stroke="#A3A3A8" stroke-width="1.2" stroke-linejoin="round" stroke-linecap="round" stroke-dasharray="2 1.5"/>
<polyline points="2911.0,1644.4 2953.5,1682.7 2945.0,1763.5 2987.6,1767.7 3004.6,1810.3 3038.6,1857.1 3115.2,1835.8 3136.4,1848.6" fill="none" stroke="#A3A3A8" stroke-width="1.2" stroke-linejoin="round" stroke-linecap="round" stroke-dasharray="2 1.5"/>
<polyline points="3136.4,1810.3 3523.5,1810.3" fill="none" stroke="#A3A3A8" stroke-width="1.2" stroke-linejoin="round" stroke-linecap="round" stroke-dasharray="2 1.5"/>
<polyline points="3136.4,1810.3 3136.4,2040.0" fill="none" stroke="#A3A3A8" stroke-width="1.2" stroke-linejoin="round" stroke-linecap="round" stroke-dasharray="2 1.5"/>
<polyline points="3523.5,1489.1 3523.5,2040.0" fill="none" stroke="#A3A3A8" stroke-width="1.2" stroke-linejoin="round" stroke-linecap="round" stroke-dasharray="2 1.5"/>
<polyline points="3523.5,1736.7 3872.3,1736.7" fill="none" stroke="#A3A3A8" stroke-width="1.2" stroke-linejoin="round" stroke-linecap="round" stroke-dasharray="2 1.5"/>
<polyline points="3523.5,1964.3 3804.2,1964.3 3870.2,1978.3" fill="none" stroke="#A3A3A8" stroke-width="1.2" stroke-linejoin="round" stroke-linecap="round" stroke-dasharray="2 1.5"/>
<polyline points="2416.4,1710.3 2450.4,1714.6 2480.2,1725.2 2493.0,1763.5 2535.5,1759.2 2578.0,1761.4 2663.1,1742.2 2697.1,1731.6" fill="none" stroke="#A3A3A8" stroke-width="1" stroke-linejoin="round" stroke-linecap="round" stroke-dasharray="2 1.5"/>
<line x1="2458" y1="1487" x2="3869" y2="1487" stroke="#BCC8E6" stroke-width="3"/>
<text x="2006.0" y="1021.5" font-size="22" fill="#454545" text-anchor="start" letter-spacing="-0.2" stroke="#fff" stroke-width="3" stroke-opacity="0.85" paint-order="stroke" stroke-linejoin="round">Prince Rupert</text>
<text x="2418.0" y="1473.0" font-size="22" fill="#454545" text-anchor="start" letter-spacing="0.096" stroke="#fff" stroke-width="3" stroke-opacity="0.85" paint-order="stroke" stroke-linejoin="round">Vancouver</text>
<text x="2932.8" y="1319.5" font-size="22" fill="#454545" text-anchor="start" letter-spacing="-0.101" stroke="#fff" stroke-width="3" stroke-opacity="0.85" paint-order="stroke" stroke-linejoin="round">Calgary</text>
<text x="3328.0" y="1222.7" font-size="22" fill="#454545" text-anchor="start" letter-spacing="-0.217" stroke="#fff" stroke-width="3" stroke-opacity="0.85" paint-order="stroke" stroke-linejoin="round">Saskatoon</text>
<text x="3458.4" y="1372.0" font-size="22" fill="#454545" text-anchor="start" letter-spacing="-0.519" stroke="#fff" stroke-width="3" stroke-opacity="0.85" paint-order="stroke" stroke-linejoin="round">Regina</text>
<text x="3707.4" y="1423.0" font-size="22" fill="#454545" text-anchor="start" letter-spacing="0.204" stroke="#fff" stroke-width="3" stroke-opacity="0.85" paint-order="stroke" stroke-linejoin="round">Brandon</text>
<text x="2419.4" y="1543.0" font-size="22" fill="#454545" text-anchor="start" letter-spacing="0.08" stroke="#fff" stroke-width="3" stroke-opacity="0.85" paint-order="stroke" stroke-linejoin="round">Victoria</text>
<text x="2441.0" y="1656.0" font-size="22" fill="#454545" text-anchor="start" letter-spacing="0.145" stroke="#fff" stroke-width="3" stroke-opacity="0.85" paint-order="stroke" stroke-linejoin="round">Olympia</text>
<text x="2743.0" y="1607.0" font-size="22" fill="#454545" text-anchor="start" letter-spacing="-0.406" stroke="#fff" stroke-width="3" stroke-opacity="0.85" paint-order="stroke" stroke-linejoin="round">Spokane</text>
<text x="2452.5" y="1778.0" font-size="22" fill="#454545" text-anchor="start" letter-spacing="0.133" stroke="#fff" stroke-width="3" stroke-opacity="0.85" paint-order="stroke" stroke-linejoin="round">Portland</text>
<text x="2444.0" y="1824.0" font-size="22" fill="#454545" text-anchor="start" letter-spacing="-0.271" stroke="#fff" stroke-width="3" stroke-opacity="0.85" paint-order="stroke" stroke-linejoin="round">Salem</text>
<text x="2825.6" y="1926.0" font-size="22" fill="#454545" text-anchor="start" letter-spacing="-0.386" stroke="#fff" stroke-width="3" stroke-opacity="0.85" paint-order="stroke" stroke-linejoin="round">Boise</text>
<text x="3071.0" y="1619.0" font-size="22" fill="#454545" text-anchor="start" letter-spacing="-0.325" stroke="#fff" stroke-width="3" stroke-opacity="0.85" paint-order="stroke" stroke-linejoin="round">Great Falls</text>
<text x="2931.0" y="1670.8" font-size="22" fill="#454545" text-anchor="start" letter-spacing="-0.1" stroke="#fff" stroke-width="3" stroke-opacity="0.85" paint-order="stroke" stroke-linejoin="round">Missoula</text>
<text x="3047.5" y="1693.0" font-size="22" fill="#454545" text-anchor="start" letter-spacing="-0.202" stroke="#fff" stroke-width="3" stroke-opacity="0.85" paint-order="stroke" stroke-linejoin="round">Helena</text>
<text x="3242.8" y="1757.0" font-size="22" fill="#454545" text-anchor="start" letter-spacing="0.063" stroke="#fff" stroke-width="3" stroke-opacity="0.85" paint-order="stroke" stroke-linejoin="round">Billings</text>
<text x="3647.7" y="1559.0" font-size="22" fill="#454545" text-anchor="start" letter-spacing="0.501" stroke="#fff" stroke-width="3" stroke-opacity="0.85" paint-order="stroke" stroke-linejoin="round">Minot</text>
<text x="3658.8" y="1676.0" font-size="22" fill="#454545" text-anchor="start" letter-spacing="0.069" stroke="#fff" stroke-width="3" stroke-opacity="0.85" paint-order="stroke" stroke-linejoin="round">Bismarck</text>
<text x="3699.0" y="1868.6" font-size="22" fill="#454545" text-anchor="start" letter-spacing="-0.18" stroke="#fff" stroke-width="3" stroke-opacity="0.85" paint-order="stroke" stroke-linejoin="round">Pierre</text>
<text x="3369.0" y="1982.0" font-size="22" fill="#454545" text-anchor="start" letter-spacing="-1.319" stroke="#fff" stroke-width="3" stroke-opacity="0.85" paint-order="stroke" stroke-linejoin="round">Casper</text>
<text x="2553.8" y="1897.5" font-size="19" fill="#514848" text-anchor="start" font-weight="700" letter-spacing="1.875">OREGON</text>
<text x="2935.0" y="1923.0" font-size="19" fill="#514848" text-anchor="start" font-weight="700" letter-spacing="2.696">IDAHO</text>
<circle cx="2996.3" cy="1106.4" r="59" fill="#E57C70" stroke="#1A0F80" stroke-width="2.2"/>
<circle cx="3900.8" cy="1408.8" r="64.7" fill="#E8897E" stroke="#1A0F80" stroke-width="2.2"/>
<circle cx="2514.2" cy="1612.5" r="38.5" fill="#E57C70" stroke="#1A0F80" stroke-width="2.2"/>
<circle cx="2778" cy="1601" r="33" fill="#F9DDD9" stroke="#1A0F80" stroke-width="2.2"/>
<circle cx="2498" cy="1764.3" r="14.5" fill="#F9DDD9" stroke="#1A0F80" stroke-width="2.2"/>
<circle cx="3274.7" cy="1747.3" r="19.5" fill="#F9DDD9" stroke="#1A0F80" stroke-width="2.2"/>
<circle cx="3389.5" cy="1972" r="23.5" fill="#F9DDD9" stroke="#1A0F80" stroke-width="2.2"/>
</g></svg>
</div>
<div class="t" style="left:1965.0px;top:942.5px;font-size:29.4px;font-weight:700;color:#111C2C;letter-spacing:-0.58px;">[Flights] Origin Time Delayed</div>
<div style="position:absolute;left:1971px;top:1006px;width:64px;height:128px;background:#fff;border-radius:9px;box-shadow:0 2px 5px rgba(30,45,80,.10),0 8px 22px rgba(30,45,80,.13),0 20px 44px rgba(30,45,80,.10);"></div>
<div style="position:absolute;left:1971px;top:1150px;width:64px;height:64px;background:#fff;border-radius:9px;box-shadow:0 2px 5px rgba(30,45,80,.10),0 8px 22px rgba(30,45,80,.13),0 20px 44px rgba(30,45,80,.10);"></div>
<div style="position:absolute;left:1971px;top:1230px;width:64px;height:64px;background:#fff;border-radius:9px;box-shadow:0 2px 5px rgba(30,45,80,.10),0 8px 22px rgba(30,45,80,.13),0 20px 44px rgba(30,45,80,.10);"></div>
<div style="position:absolute;left:1971px;top:1310px;width:64px;height:64px;background:#fff;border-radius:9px;box-shadow:0 2px 5px rgba(30,45,80,.10),0 8px 22px rgba(30,45,80,.13),0 20px 44px rgba(30,45,80,.10);"></div>
<div style="position:absolute;left:3782px;top:1006px;width:64px;height:64px;background:#fff;border-radius:9px;box-shadow:0 2px 5px rgba(30,45,80,.10),0 8px 22px rgba(30,45,80,.13),0 20px 44px rgba(30,45,80,.10);"></div>
<svg style="position:absolute;left:1987px;top:1022px" width="32" height="32" viewBox="0 0 32 32"><circle cx="16" cy="16" r="15" fill="#1D2A3E"/><path d="M16 7.5v17M7.5 16h17" stroke="#fff" stroke-width="2.2"/></svg>
<svg style="position:absolute;left:1987px;top:1086px" width="32" height="32" viewBox="0 0 32 32"><circle cx="16" cy="16" r="15" fill="#1D2A3E"/><path d="M7.5 16h17" stroke="#fff" stroke-width="2.2"/></svg>
<svg style="position:absolute;left:1987px;top:1165.5px" width="32" height="32" viewBox="0 0 32 32"><g stroke="#1D2A3E" stroke-width="2" fill="none"><path d="M16 1.5v6M16 24.5v6M1.5 16h6M24.5 16h6"/><circle cx="16" cy="16" r="11.5" stroke-dasharray="12.06 6" stroke-dashoffset="-3"/></g><circle cx="16" cy="16" r="2" fill="#1D2A3E"/></svg>
<svg style="position:absolute;left:1987px;top:1245.5px" width="32" height="32" viewBox="0 0 32 32"><g stroke="#1D2A3E" stroke-width="2" fill="none" stroke-linecap="round" stroke-linejoin="round"><path d="M6.2 25.4 L26.2 6.2M21.8 3.6H29.2V11M2.6 22V29.4H10.4"/></g></svg>
<svg style="position:absolute;left:1986px;top:1325.5px" width="34" height="34" viewBox="0 0 34 34"><path d="M11.8 2.6 L7.6 7.6 A4.05 4.05 0 0 0 13.8 12.8 L18 7.8 A8.6 8.6 0 0 1 18.46 12.57 L30.4 22.8 A4.3 4.3 0 0 1 24.8 29.4 L12.86 19.1 A8.6 8.6 0 1 1 11.8 2.6 Z" stroke="#1D2A3E" stroke-width="2" fill="none" stroke-linejoin="round"/><circle cx="26.4" cy="25" r="1.7" fill="#1D2A3E"/></svg>
<svg style="position:absolute;left:3799px;top:1025px" width="30" height="26" viewBox="0 0 30 26"><g stroke="#1D2A3E" stroke-width="2" fill="none"><path d="M12 3.5h17M1.5 13h27.5M12 22.5h17M9.5 5 L1.5 13 L9.5 21"/></g></svg>
<div style="position:absolute;left:3718px;top:1933px;width:127.5px;height:32px;background:rgba(246,248,252,.92)"></div>
<div class="t" style="left:3726.5px;top:1938.7px;font-size:21.0px;font-weight:700;color:#1D2A3E;letter-spacing:-0.364px;">zoom:</div>
<div class="t" style="left:3794.0px;top:1938.7px;font-size:21.0px;font-weight:400;color:#1D2A3E;letter-spacing:0.533px;">4.28</div>
<div style="position:absolute;left:3069px;top:1981.7px;width:776.5px;height:32px;background:#F6F8FC"></div>
<div class="t" style="left:3077.0px;top:1987.2px;font-size:21.0px;font-weight:400;color:#1D2A3E;letter-spacing:0.631px;-webkit-text-stroke:0.45px #1D2A3E;">Elastic Maps Service</div>
<svg style="position:absolute;left:3295.5px;top:1988.5px" width="20" height="20" viewBox="0 0 20 20"><g stroke="#1D2A3E" stroke-width="1.8" fill="none"><path d="M8 3.2H4.2a2 2 0 0 0-2 2V16a2 2 0 0 0 2 2H14.8a2 2 0 0 0 2-2V12M11.5 1.2h7.3v7.3M18.4 1.6 L8.6 11.4"/></g></svg>
<div class="t" style="left:3318.0px;top:1983.7px;font-size:25.2px;font-weight:400;color:#1D2A3E;">,</div>
<div class="t" style="left:3329.0px;top:1987.2px;font-size:21.0px;font-weight:400;color:#1D2A3E;letter-spacing:0.685px;-webkit-text-stroke:0.45px #1D2A3E;">OpenMapTiles</div>
<svg style="position:absolute;left:3484px;top:1988.5px" width="20" height="20" viewBox="0 0 20 20"><g stroke="#1D2A3E" stroke-width="1.8" fill="none"><path d="M8 3.2H4.2a2 2 0 0 0-2 2V16a2 2 0 0 0 2 2H14.8a2 2 0 0 0 2-2V12M11.5 1.2h7.3v7.3M18.4 1.6 L8.6 11.4"/></g></svg>
<div class="t" style="left:3506.5px;top:1983.7px;font-size:25.2px;font-weight:400;color:#1D2A3E;">,</div>
<div class="t" style="left:3517.5px;top:1987.2px;font-size:21.0px;font-weight:400;color:#1D2A3E;letter-spacing:0.912px;-webkit-text-stroke:0.45px #1D2A3E;">OpenStreetMap contributors</div>
<svg style="position:absolute;left:3817px;top:1988.5px" width="20" height="20" viewBox="0 0 20 20"><g stroke="#1D2A3E" stroke-width="1.8" fill="none"><path d="M8 3.2H4.2a2 2 0 0 0-2 2V16a2 2 0 0 0 2 2H14.8a2 2 0 0 0 2-2V12M11.5 1.2h7.3v7.3M18.4 1.6 L8.6 11.4"/></g></svg>
</body></html>
